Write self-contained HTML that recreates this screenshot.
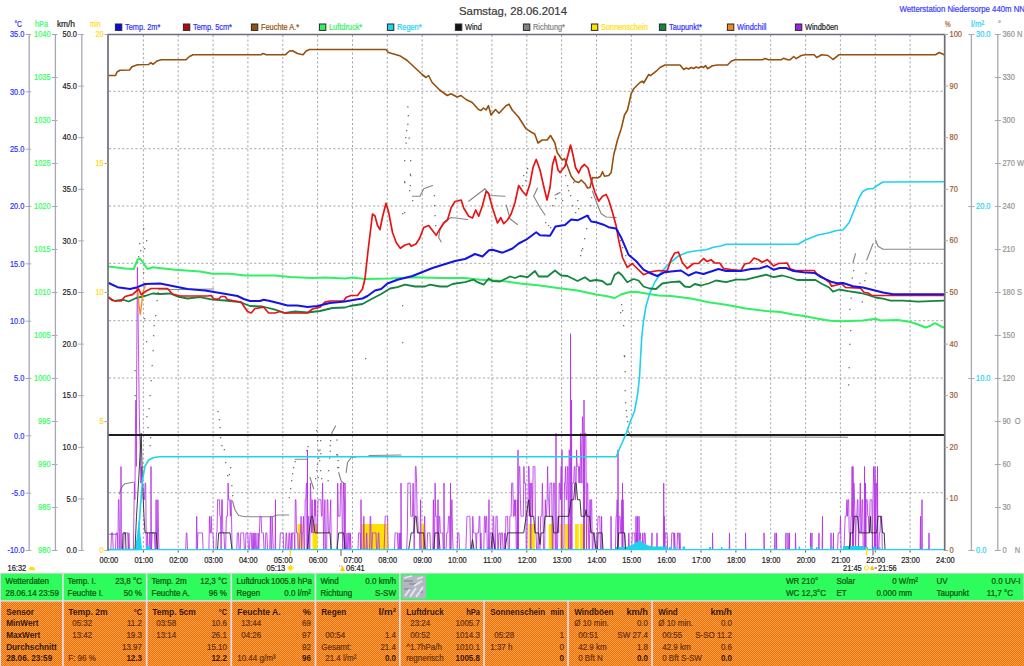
<!DOCTYPE html><html><head><meta charset="utf-8"><title>Wetterstation</title>
<style>html,body{margin:0;padding:0;background:#fff}svg{display:block}text{font-family:"Liberation Sans",sans-serif}</style></head><body>
<svg width="1024" height="666" viewBox="0 0 1024 666">
<defs><pattern id="dz" width="2" height="2" patternUnits="userSpaceOnUse"><rect width="2" height="2" fill="#EC6C08"/><rect x="0" y="0" width="1" height="1" fill="#FFA448"/><rect x="1" y="1" width="1" height="1" fill="#FFA448"/></pattern>
<clipPath id="cp"><rect x="108.0" y="34.0" width="836.5" height="517.0"/></clipPath></defs>
<rect width="1024" height="666" fill="#ffffff"/>
<path d="M143.4,35.0 V550.0 M178.2,35.0 V550.0 M213.1,35.0 V550.0 M247.9,35.0 V550.0 M282.8,35.0 V550.0 M317.6,35.0 V550.0 M352.5,35.0 V550.0 M387.3,35.0 V550.0 M422.2,35.0 V550.0 M457.0,35.0 V550.0 M491.9,35.0 V550.0 M526.8,35.0 V550.0 M561.6,35.0 V550.0 M596.5,35.0 V550.0 M631.3,35.0 V550.0 M666.2,35.0 V550.0 M701.0,35.0 V550.0 M735.9,35.0 V550.0 M770.7,35.0 V550.0 M805.6,35.0 V550.0 M840.4,35.0 V550.0 M875.3,35.0 V550.0 M910.1,35.0 V550.0 M109.0,91.3 H944.5 M109.0,148.7 H944.5 M109.0,206.0 H944.5 M109.0,263.3 H944.5 M109.0,320.7 H944.5 M109.0,378.0 H944.5 M109.0,435.3 H944.5 M109.0,492.7 H944.5" stroke="#85858f" stroke-width="0.75" stroke-dasharray="2.1 2.3" fill="none"/>
<g clip-path="url(#cp)" fill="none" stroke-linejoin="round" stroke-linecap="round">
<rect x="297.5" y="524" width="5.0" height="26" fill="#FFE100" stroke="none"/>
<rect x="312.5" y="524" width="5.0" height="26" fill="#FFE100" stroke="none"/>
<rect x="361.2" y="524" width="26.3" height="26" fill="#FFE100" stroke="none"/>
<rect x="421.2" y="524" width="3.8" height="26" fill="#FFE100" stroke="none"/>
<rect x="528.7" y="524" width="6.3" height="26" fill="#FFE100" stroke="none"/>
<rect x="548.7" y="524" width="5.0" height="26" fill="#FFE100" stroke="none"/>
<rect x="560.0" y="524" width="2.5" height="26" fill="#FFE100" stroke="none"/>
<rect x="565.0" y="524" width="6.2" height="26" fill="#FFE100" stroke="none"/>
<rect x="575.0" y="524" width="3.7" height="26" fill="#FFE100" stroke="none"/>
<rect x="580.0" y="524" width="3.7" height="26" fill="#FFE100" stroke="none"/>
<rect x="586.2" y="524" width="1.3" height="26" fill="#FFE100" stroke="none"/>
<path d="M108.7,534.2 L117.0,534.2 M119.5,494.0 L120.5,490.0 L122.5,486.2 L125.0,483.7 L134.5,482.0 M158.7,289.7 L213.7,289.0 M232.5,501.0 L235.0,510.0 L238.7,515.5 L245.0,516.7 L272.5,516.7 L277.5,515.0 L288.7,515.0 M295.0,459.2 L307.5,459.2 M310.0,477.5 L313.7,488.7 M331.3,436.0 L332.0,432.5 L335.6,426.0 M338.7,472.5 L341.2,481.2 L344.5,483.7 M346.2,472.5 L347.5,462.5 L351.2,457.5 L356.0,457.0 M369.0,455.5 L401.0,455.0 M412.5,196.2 L420.0,196.2 L423.7,188.7 L432.5,185.5 M441.2,242.0 L438.7,237.5 L440.0,230.0 L445.0,221.2 L451.2,217.5 L467.5,219.5 M468.7,201.2 L477.5,194.5 L485.0,188.7 L490.0,195.5 L505.0,196.2 M506.2,205.0 L510.0,218.7 L517.5,224.5 M537.5,188.0 L533.7,196.2 L540.0,207.5 L545.0,215.0 M555.0,195.0 L560.0,192.5 M592.5,191.2 L597.5,205.0 L601.2,213.7 L606.2,217.0 L616.2,217.5 M627.5,430.0 L631.2,436.7 L847.5,437.2 M855.5,253.7 L853.0,262.5 M873.0,243.7 L866.7,260.0 M875.5,240.0 L878.0,246.2 L883.0,249.2 L944.2,249.2" stroke="#868686" stroke-width="1.15"/>
<g fill="#707078" stroke="none"><rect x="330.0" y="440.0" width="1.3" height="1.3"/><rect x="329.6" y="445.0" width="1.3" height="1.3"/><rect x="329.6" y="450.6" width="1.3" height="1.3"/><rect x="329.0" y="457.5" width="1.3" height="1.3"/><rect x="328.0" y="470.0" width="1.3" height="1.3"/><rect x="327.5" y="480.0" width="1.3" height="1.3"/><rect x="336.2" y="439.4" width="1.3" height="1.3"/><rect x="336.9" y="454.4" width="1.3" height="1.3"/><rect x="337.5" y="460.0" width="1.3" height="1.3"/><rect x="338.1" y="466.9" width="1.3" height="1.3"/><rect x="320.0" y="440.0" width="1.3" height="1.3"/><rect x="319.4" y="449.4" width="1.3" height="1.3"/><rect x="320.2" y="453.0" width="1.3" height="1.3"/><rect x="318.0" y="457.5" width="1.3" height="1.3"/><rect x="316.9" y="463.7" width="1.3" height="1.3"/><rect x="316.2" y="470.0" width="1.3" height="1.3"/><rect x="317.5" y="476.9" width="1.3" height="1.3"/><rect x="315.0" y="478.0" width="1.3" height="1.3"/><rect x="407.2" y="106.2" width="1.3" height="1.3"/><rect x="407.7" y="115.0" width="1.3" height="1.3"/><rect x="407.2" y="123.7" width="1.3" height="1.3"/><rect x="406.0" y="130.0" width="1.3" height="1.3"/><rect x="408.5" y="137.5" width="1.3" height="1.3"/><rect x="405.5" y="142.5" width="1.3" height="1.3"/><rect x="409.7" y="173.7" width="1.3" height="1.3"/><rect x="404.0" y="181.2" width="1.3" height="1.3"/><rect x="409.7" y="185.0" width="1.3" height="1.3"/><rect x="151.5" y="365.0" width="1.3" height="1.3"/><rect x="150.5" y="380.0" width="1.3" height="1.3"/><rect x="149.5" y="395.0" width="1.3" height="1.3"/><rect x="148.5" y="408.0" width="1.3" height="1.3"/><rect x="134.5" y="370.0" width="1.3" height="1.3"/><rect x="134.5" y="395.0" width="1.3" height="1.3"/><rect x="405.0" y="137.0" width="1.3" height="1.3"/><rect x="410.0" y="160.0" width="1.3" height="1.3"/><rect x="404.0" y="160.0" width="1.3" height="1.3"/><rect x="410.0" y="175.0" width="1.3" height="1.3"/><rect x="404.0" y="182.0" width="1.3" height="1.3"/><rect x="409.0" y="190.0" width="1.3" height="1.3"/><rect x="412.0" y="200.0" width="1.3" height="1.3"/><rect x="404.0" y="212.0" width="1.3" height="1.3"/><rect x="433.7" y="195.0" width="1.3" height="1.3"/><rect x="434.0" y="205.0" width="1.3" height="1.3"/><rect x="434.5" y="215.0" width="1.3" height="1.3"/><rect x="435.0" y="225.0" width="1.3" height="1.3"/><rect x="146.2" y="416.0" width="1.3" height="1.3"/><rect x="147.5" y="427.0" width="1.3" height="1.3"/><rect x="150.0" y="437.0" width="1.3" height="1.3"/><rect x="149.5" y="445.0" width="1.3" height="1.3"/><rect x="146.0" y="240.0" width="1.3" height="1.3"/><rect x="144.0" y="248.0" width="1.3" height="1.3"/><rect x="140.0" y="250.0" width="1.3" height="1.3"/><rect x="138.0" y="256.0" width="1.3" height="1.3"/><rect x="143.0" y="228.0" width="1.3" height="1.3"/><rect x="139.0" y="243.0" width="1.3" height="1.3"/><rect x="137.0" y="262.0" width="1.3" height="1.3"/><rect x="144.0" y="295.0" width="1.3" height="1.3"/><rect x="143.0" y="272.0" width="1.3" height="1.3"/><rect x="157.5" y="292.0" width="1.3" height="1.3"/><rect x="156.5" y="300.0" width="1.3" height="1.3"/><rect x="155.0" y="315.0" width="1.3" height="1.3"/><rect x="153.5" y="325.0" width="1.3" height="1.3"/><rect x="153.0" y="335.0" width="1.3" height="1.3"/><rect x="152.5" y="350.0" width="1.3" height="1.3"/><rect x="146.0" y="341.0" width="1.3" height="1.3"/><rect x="144.0" y="318.0" width="1.3" height="1.3"/><rect x="217.5" y="411.0" width="1.3" height="1.3"/><rect x="218.7" y="419.0" width="1.3" height="1.3"/><rect x="219.5" y="427.0" width="1.3" height="1.3"/><rect x="220.0" y="437.0" width="1.3" height="1.3"/><rect x="221.2" y="445.0" width="1.3" height="1.3"/><rect x="223.7" y="449.0" width="1.3" height="1.3"/><rect x="225.0" y="462.0" width="1.3" height="1.3"/><rect x="230.0" y="467.0" width="1.3" height="1.3"/><rect x="228.7" y="474.0" width="1.3" height="1.3"/><rect x="227.0" y="475.0" width="1.3" height="1.3"/><rect x="231.2" y="485.0" width="1.3" height="1.3"/><rect x="232.0" y="495.0" width="1.3" height="1.3"/><rect x="288.7" y="497.0" width="1.3" height="1.3"/><rect x="290.0" y="488.0" width="1.3" height="1.3"/><rect x="291.0" y="480.0" width="1.3" height="1.3"/><rect x="292.0" y="473.0" width="1.3" height="1.3"/><rect x="293.0" y="467.0" width="1.3" height="1.3"/><rect x="294.5" y="461.0" width="1.3" height="1.3"/><rect x="306.2" y="450.0" width="1.3" height="1.3"/><rect x="307.5" y="446.0" width="1.3" height="1.3"/><rect x="317.0" y="440.0" width="1.3" height="1.3"/><rect x="318.0" y="450.0" width="1.3" height="1.3"/><rect x="319.0" y="460.0" width="1.3" height="1.3"/><rect x="320.0" y="470.0" width="1.3" height="1.3"/><rect x="321.0" y="478.0" width="1.3" height="1.3"/><rect x="316.0" y="430.0" width="1.3" height="1.3"/><rect x="336.0" y="454.0" width="1.3" height="1.3"/><rect x="337.0" y="467.0" width="1.3" height="1.3"/><rect x="525.0" y="180.0" width="1.3" height="1.3"/><rect x="523.0" y="175.0" width="1.3" height="1.3"/><rect x="527.0" y="168.0" width="1.3" height="1.3"/><rect x="522.0" y="185.0" width="1.3" height="1.3"/><rect x="526.0" y="172.0" width="1.3" height="1.3"/><rect x="545.0" y="222.0" width="1.3" height="1.3"/><rect x="548.0" y="225.0" width="1.3" height="1.3"/><rect x="550.0" y="227.0" width="1.3" height="1.3"/><rect x="552.0" y="205.0" width="1.3" height="1.3"/><rect x="555.0" y="198.0" width="1.3" height="1.3"/><rect x="557.0" y="193.0" width="1.3" height="1.3"/><rect x="565.0" y="175.0" width="1.3" height="1.3"/><rect x="567.0" y="185.0" width="1.3" height="1.3"/><rect x="570.0" y="195.0" width="1.3" height="1.3"/><rect x="572.0" y="205.0" width="1.3" height="1.3"/><rect x="575.0" y="212.0" width="1.3" height="1.3"/><rect x="577.0" y="200.0" width="1.3" height="1.3"/><rect x="568.0" y="190.0" width="1.3" height="1.3"/><rect x="573.0" y="182.0" width="1.3" height="1.3"/><rect x="562.0" y="200.0" width="1.3" height="1.3"/><rect x="578.0" y="208.0" width="1.3" height="1.3"/><rect x="580.0" y="255.0" width="1.3" height="1.3"/><rect x="582.0" y="248.0" width="1.3" height="1.3"/><rect x="584.0" y="238.0" width="1.3" height="1.3"/><rect x="586.0" y="228.0" width="1.3" height="1.3"/><rect x="588.0" y="215.0" width="1.3" height="1.3"/><rect x="590.0" y="205.0" width="1.3" height="1.3"/><rect x="591.0" y="197.0" width="1.3" height="1.3"/><rect x="581.0" y="250.0" width="1.3" height="1.3"/><rect x="617.5" y="230.0" width="1.3" height="1.3"/><rect x="620.0" y="240.0" width="1.3" height="1.3"/><rect x="622.0" y="247.0" width="1.3" height="1.3"/><rect x="625.0" y="255.0" width="1.3" height="1.3"/><rect x="623.7" y="355.0" width="1.3" height="1.3"/><rect x="624.5" y="371.0" width="1.3" height="1.3"/><rect x="624.5" y="390.0" width="1.3" height="1.3"/><rect x="625.0" y="402.0" width="1.3" height="1.3"/><rect x="625.7" y="410.0" width="1.3" height="1.3"/><rect x="626.2" y="416.0" width="1.3" height="1.3"/><rect x="627.0" y="421.0" width="1.3" height="1.3"/><rect x="627.5" y="427.0" width="1.3" height="1.3"/><rect x="620.0" y="312.0" width="1.3" height="1.3"/><rect x="621.0" y="304.0" width="1.3" height="1.3"/><rect x="622.0" y="310.0" width="1.3" height="1.3"/><rect x="623.0" y="325.0" width="1.3" height="1.3"/><rect x="624.0" y="356.0" width="1.3" height="1.3"/><rect x="853.0" y="270.0" width="1.3" height="1.3"/><rect x="851.7" y="277.5" width="1.3" height="1.3"/><rect x="850.5" y="297.5" width="1.3" height="1.3"/><rect x="849.2" y="308.7" width="1.3" height="1.3"/><rect x="865.5" y="272.5" width="1.3" height="1.3"/><rect x="864.2" y="280.0" width="1.3" height="1.3"/><rect x="859.2" y="282.5" width="1.3" height="1.3"/><rect x="861.7" y="301.2" width="1.3" height="1.3"/><rect x="850.0" y="330.0" width="1.3" height="1.3"/><rect x="849.2" y="343.7" width="1.3" height="1.3"/><rect x="848.5" y="367.0" width="1.3" height="1.3"/><rect x="848.0" y="384.2" width="1.3" height="1.3"/><rect x="402.0" y="213.0" width="1.3" height="1.3"/><rect x="402.0" y="305.0" width="1.3" height="1.3"/><rect x="402.0" y="342.0" width="1.3" height="1.3"/><rect x="365.0" y="358.0" width="1.3" height="1.3"/></g>
<path d="M108.0,549.5 L108.6,549.5 L109.2,549.5 L109.7,549.5 L110.3,549.5 L110.9,549.5 L111.5,532.9 L112.1,532.9 L112.6,532.9 L113.2,549.5 L113.8,549.5 L114.4,549.5 L115.0,549.5 L115.5,549.5 L116.1,532.9 L116.7,532.9 L117.3,532.9 L117.9,549.5 L118.4,499.7 L119.0,499.7 L119.6,549.5 L120.2,549.5 L120.7,549.5 L120.8,549.5 L121.0,466.5 L121.3,549.5 L121.3,549.5 L121.9,549.5 L122.5,549.5 L123.1,549.5 L123.7,549.5 L124.2,532.9 L124.8,532.9 L125.4,532.9 L126.0,532.9 L126.6,532.9 L127.1,532.9 L127.7,532.9 L128.3,549.5 L128.9,532.9 L129.5,549.5 L130.0,549.5 L130.6,549.5 L131.2,549.5 L131.8,549.5 L132.4,549.5 L132.9,549.5 L133.4,549.5 L133.9,516.3 L134.4,483.1 L134.9,499.7 L135.4,433.3 L135.9,400.1 L136.3,466.5 L136.8,350.3 L137.4,267.3 L137.9,300.5 L138.5,350.3 L139.1,400.1 L139.7,433.3 L140.3,449.9 L140.9,483.1 L141.4,466.5 L141.6,483.1 L142.2,483.1 L142.8,483.1 L143.4,499.7 L144.0,499.7 L144.5,499.7 L145.1,483.1 L145.7,483.1 L146.3,549.5 L146.9,549.5 L147.4,532.9 L148.0,549.5 L148.6,549.5 L149.2,549.5 L149.8,532.9 L150.3,549.5 L150.7,549.5 L150.9,549.5 L151.0,466.5 L151.3,549.5 L151.5,549.5 L152.1,532.9 L152.7,532.9 L153.2,532.9 L153.8,532.9 L154.4,532.9 L155.0,549.5 L155.6,549.5 L156.1,499.7 L156.7,549.5 L157.3,549.5 L157.9,499.7 L158.5,532.9 L159.0,549.5 L159.6,549.5 L160.2,549.5 L160.8,549.5 L161.4,549.5 L161.9,549.5 L162.5,549.5 L163.1,549.5 L163.7,549.5 L164.3,549.5 L164.8,549.5 L165.4,549.5 L166.0,549.5 L166.6,549.5 L167.2,549.5 L167.7,549.5 L168.3,549.5 L168.9,549.5 L169.5,549.5 L170.1,549.5 L170.6,549.5 L171.2,549.5 L171.8,549.5 L172.4,549.5 L173.0,549.5 L173.5,549.5 L174.1,549.5 L174.7,549.5 L175.3,549.5 L175.9,549.5 L176.4,549.5 L177.0,549.5 L177.6,549.5 L178.2,549.5 L178.8,549.5 L179.3,549.5 L179.9,549.5 L180.5,549.5 L181.1,549.5 L181.7,549.5 L182.2,549.5 L182.8,549.5 L183.4,549.5 L184.0,549.5 L184.6,549.5 L185.1,549.5 L185.7,549.5 L186.3,532.9 L186.9,532.9 L187.5,549.5 L188.0,549.5 L188.6,549.5 L189.2,549.5 L189.8,549.5 L190.4,549.5 L190.9,549.5 L191.5,549.5 L192.1,549.5 L192.7,549.5 L193.3,549.5 L193.8,549.5 L194.4,549.5 L195.0,549.5 L195.6,549.5 L196.2,549.5 L196.7,516.3 L197.3,549.5 L197.9,532.9 L198.5,532.9 L199.1,532.9 L199.6,532.9 L200.2,532.9 L200.8,532.9 L201.4,532.9 L202.0,532.9 L202.5,532.9 L203.1,549.5 L203.7,549.5 L204.3,549.5 L204.9,549.5 L205.4,549.5 L206.0,549.5 L206.6,549.5 L207.2,549.5 L207.8,549.5 L208.3,549.5 L208.9,549.5 L209.5,516.3 L210.1,532.9 L210.7,532.9 L211.2,516.3 L211.8,532.9 L212.4,532.9 L213.0,532.9 L213.6,549.5 L214.1,549.5 L214.7,549.5 L215.3,549.5 L215.9,549.5 L216.5,532.9 L217.0,532.9 L217.6,499.7 L218.2,499.7 L218.8,499.7 L219.4,499.7 L219.9,516.3 L220.5,516.3 L221.1,549.5 L221.7,499.7 L222.3,499.7 L222.8,532.9 L223.4,532.9 L224.0,532.9 L224.6,549.5 L225.2,549.5 L225.7,549.5 L226.3,516.3 L226.9,516.3 L227.5,516.3 L228.1,483.1 L228.6,499.7 L229.2,499.7 L229.8,499.7 L230.4,516.3 L231.0,499.7 L231.5,516.3 L232.1,549.5 L232.7,549.5 L233.3,549.5 L233.9,549.5 L234.4,549.5 L235.0,549.5 L235.6,549.5 L236.2,549.5 L236.8,549.5 L237.3,532.9 L237.9,532.9 L238.5,532.9 L239.1,549.5 L239.7,549.5 L240.2,549.5 L240.8,532.9 L241.4,532.9 L242.0,532.9 L242.6,532.9 L243.1,532.9 L243.7,532.9 L244.3,549.5 L244.9,549.5 L245.5,549.5 L246.0,532.9 L246.6,532.9 L247.2,532.9 L247.8,532.9 L248.4,549.5 L248.9,549.5 L249.5,549.5 L250.1,532.9 L250.7,532.9 L251.3,532.9 L251.8,549.5 L252.4,549.5 L253.0,532.9 L253.6,549.5 L254.2,532.9 L254.7,549.5 L255.3,549.5 L255.9,532.9 L256.5,549.5 L257.1,549.5 L257.6,549.5 L258.2,532.9 L258.8,549.5 L259.4,532.9 L260.0,516.3 L260.5,516.3 L261.1,516.3 L261.7,532.9 L262.3,532.9 L262.9,532.9 L263.4,532.9 L264.0,549.5 L264.6,549.5 L265.2,549.5 L265.8,532.9 L266.3,532.9 L266.9,532.9 L267.5,549.5 L268.1,549.5 L268.7,549.5 L269.2,549.5 L269.8,549.5 L270.4,516.3 L271.0,549.5 L271.6,549.5 L272.1,516.3 L272.7,532.9 L273.3,549.5 L273.9,549.5 L274.5,549.5 L275.0,549.5 L275.1,549.5 L275.5,499.7 L275.6,549.5 L275.9,549.5 L276.2,549.5 L276.8,549.5 L277.4,549.5 L277.9,549.5 L278.5,549.5 L279.1,549.5 L279.7,549.5 L280.3,532.9 L280.8,532.9 L281.4,532.9 L282.0,532.9 L282.6,532.9 L283.2,532.9 L283.7,549.5 L284.3,549.5 L284.9,549.5 L285.5,549.5 L286.1,532.9 L286.6,532.9 L287.2,549.5 L287.8,549.5 L288.4,549.5 L289.0,532.9 L289.5,532.9 L290.1,549.5 L290.7,549.5 L291.3,532.9 L291.9,549.5 L292.4,532.9 L293.0,532.9 L293.6,532.9 L294.2,532.9 L294.8,549.5 L295.3,499.7 L295.9,499.7 L296.5,532.9 L297.1,532.9 L297.7,532.9 L298.2,549.5 L298.8,549.5 L299.4,549.5 L300.0,532.9 L300.6,532.9 L301.1,516.3 L301.7,549.5 L302.3,532.9 L302.9,532.9 L303.5,516.3 L304.0,549.5 L304.6,549.5 L305.2,499.7 L305.8,499.7 L306.4,483.1 L306.9,483.1 L307.1,549.5 L307.5,449.9 L307.5,516.3 L307.9,549.5 L308.1,516.3 L308.7,516.3 L309.3,549.5 L309.8,549.5 L310.4,483.1 L311.0,499.7 L311.6,532.9 L312.2,499.7 L312.7,532.9 L313.3,532.9 L313.9,532.9 L314.5,499.7 L315.1,516.3 L315.6,499.7 L316.2,532.9 L316.8,532.9 L317.4,532.9 L318.0,499.7 L318.5,499.7 L319.1,499.7 L319.7,499.7 L320.3,499.7 L320.9,499.7 L321.4,516.3 L322.0,516.3 L322.6,483.1 L323.2,516.3 L323.8,549.5 L324.3,516.3 L324.9,499.7 L325.5,549.5 L326.1,549.5 L326.7,549.5 L327.2,499.7 L327.8,499.7 L328.4,532.9 L329.0,532.9 L329.6,532.9 L330.1,516.3 L330.7,499.7 L331.3,549.5 L331.9,549.5 L332.5,549.5 L333.0,549.5 L333.6,549.5 L334.2,549.5 L334.8,549.5 L335.4,549.5 L335.9,549.5 L336.5,549.5 L337.1,549.5 L337.7,483.1 L338.3,516.3 L338.8,516.3 L339.4,516.3 L340.0,516.3 L340.6,483.1 L341.2,483.1 L341.7,483.1 L342.3,532.9 L342.9,549.5 L343.5,483.1 L344.1,499.7 L344.6,499.7 L344.6,549.5 L345.0,483.1 L345.2,499.7 L345.4,549.5 L345.8,549.5 L346.4,549.5 L347.0,532.9 L347.5,549.5 L348.1,549.5 L348.7,532.9 L349.3,532.9 L349.9,549.5 L350.4,532.9 L351.0,549.5 L351.6,549.5 L352.2,549.5 L352.8,549.5 L353.3,549.5 L353.9,549.5 L354.5,549.5 L355.1,549.5 L355.7,549.5 L356.2,549.5 L356.8,549.5 L357.4,549.5 L358.0,549.5 L358.6,532.9 L359.1,532.9 L359.7,532.9 L360.3,532.9 L360.6,549.5 L360.9,532.9 L361.0,499.7 L361.4,549.5 L361.5,549.5 L362.0,549.5 L362.6,549.5 L363.2,549.5 L363.8,516.3 L364.4,549.5 L364.9,549.5 L365.5,549.5 L366.1,549.5 L366.7,532.9 L367.3,549.5 L367.8,549.5 L368.4,549.5 L369.0,549.5 L369.6,549.5 L370.2,516.3 L370.7,516.3 L371.3,549.5 L371.9,549.5 L372.5,532.9 L373.1,532.9 L373.6,532.9 L374.2,532.9 L374.8,532.9 L375.4,532.9 L376.0,532.9 L376.5,549.5 L377.1,549.5 L377.7,549.5 L378.3,532.9 L378.9,532.9 L379.4,549.5 L380.0,549.5 L380.6,549.5 L381.2,549.5 L381.8,549.5 L382.3,549.5 L382.9,549.5 L383.5,549.5 L384.1,549.5 L384.7,532.9 L385.2,516.3 L385.8,516.3 L386.4,516.3 L387.0,516.3 L387.6,516.3 L388.1,549.5 L388.7,549.5 L389.3,549.5 L389.9,549.5 L390.5,549.5 L391.0,549.5 L391.6,549.5 L392.2,549.5 L392.8,549.5 L393.4,549.5 L393.9,549.5 L394.5,549.5 L395.1,532.9 L395.7,532.9 L396.3,532.9 L396.8,532.9 L397.4,532.9 L398.0,549.5 L398.6,549.5 L399.2,532.9 L399.7,549.5 L400.3,532.9 L400.6,549.5 L400.9,549.5 L401.0,483.1 L401.4,549.5 L401.5,549.5 L402.1,549.5 L402.6,549.5 L403.2,549.5 L403.8,549.5 L404.4,549.5 L405.0,549.5 L405.5,549.5 L406.1,549.5 L406.7,549.5 L407.3,532.9 L407.9,483.1 L408.4,483.1 L409.0,483.1 L409.6,483.1 L410.2,483.1 L410.8,516.3 L411.3,516.3 L411.9,516.3 L412.5,516.3 L413.1,483.1 L413.7,516.3 L414.2,549.5 L414.8,516.3 L415.4,466.5 L416.0,466.5 L416.6,483.1 L417.1,516.3 L417.7,516.3 L418.3,532.9 L418.9,532.9 L419.5,532.9 L420.0,549.5 L420.6,499.7 L421.2,549.5 L421.8,549.5 L422.4,549.5 L422.9,549.5 L423.5,549.5 L424.1,532.9 L424.7,516.3 L425.3,549.5 L425.8,549.5 L426.4,549.5 L427.0,549.5 L427.6,532.9 L428.2,532.9 L428.7,532.9 L429.3,532.9 L429.9,532.9 L430.5,549.5 L431.1,549.5 L431.6,549.5 L432.2,549.5 L432.8,549.5 L433.4,499.7 L434.0,549.5 L434.5,549.5 L435.1,483.1 L435.7,516.3 L436.3,516.3 L436.9,516.3 L437.4,549.5 L438.0,499.7 L438.6,549.5 L439.2,516.3 L439.8,516.3 L440.3,532.9 L440.9,532.9 L441.5,532.9 L442.1,532.9 L442.7,532.9 L443.2,549.5 L443.6,549.5 L443.8,549.5 L444.0,483.1 L444.4,549.5 L444.4,549.5 L445.0,549.5 L445.6,549.5 L446.1,549.5 L446.7,532.9 L447.3,532.9 L447.9,532.9 L448.5,516.3 L449.0,516.3 L449.6,516.3 L450.1,549.5 L450.2,532.9 L450.5,483.1 L450.8,532.9 L450.9,549.5 L451.4,516.3 L451.9,499.7 L452.5,532.9 L453.1,549.5 L453.7,549.5 L454.3,549.5 L454.8,549.5 L455.4,549.5 L456.0,549.5 L456.6,549.5 L457.2,549.5 L457.7,532.9 L458.3,532.9 L458.9,532.9 L459.5,549.5 L460.1,549.5 L460.6,549.5 L461.2,549.5 L461.8,549.5 L462.4,549.5 L463.0,549.5 L463.5,549.5 L464.1,549.5 L464.7,549.5 L465.3,549.5 L465.9,549.5 L466.4,532.9 L467.0,516.3 L467.6,516.3 L468.2,516.3 L468.8,516.3 L469.3,516.3 L469.9,516.3 L470.5,549.5 L471.1,549.5 L471.7,549.5 L472.2,549.5 L472.8,516.3 L473.4,532.9 L474.0,532.9 L474.6,532.9 L475.1,532.9 L475.7,532.9 L476.3,549.5 L476.9,532.9 L477.5,532.9 L478.0,532.9 L478.6,532.9 L479.2,516.3 L479.8,516.3 L480.4,549.5 L480.9,532.9 L481.5,549.5 L482.1,549.5 L482.7,549.5 L483.3,549.5 L483.8,549.5 L484.4,516.3 L485.0,516.3 L485.6,532.9 L486.2,516.3 L486.7,516.3 L487.3,549.5 L487.9,549.5 L488.5,549.5 L488.6,549.5 L489.0,499.7 L489.1,549.5 L489.4,549.5 L489.6,549.5 L490.2,532.9 L490.8,532.9 L491.4,532.9 L492.0,532.9 L492.5,549.5 L493.1,516.3 L493.7,516.3 L494.3,549.5 L494.9,549.5 L495.4,549.5 L496.0,516.3 L496.6,516.3 L497.2,516.3 L497.8,549.5 L498.3,549.5 L498.9,532.9 L499.5,532.9 L500.1,532.9 L500.7,549.5 L501.2,532.9 L501.8,532.9 L502.4,532.9 L503.0,549.5 L503.6,549.5 L504.1,549.5 L504.7,532.9 L505.3,549.5 L505.9,516.3 L506.5,516.3 L507.0,516.3 L507.6,516.3 L508.2,549.5 L508.8,549.5 L509.4,549.5 L509.9,516.3 L510.5,516.3 L511.1,516.3 L511.7,483.1 L512.3,483.1 L512.8,483.1 L513.4,516.3 L514.0,516.3 L514.6,499.7 L515.2,516.3 L515.7,499.7 L516.3,549.5 L516.9,549.5 L517.5,499.7 L517.6,549.5 L518.0,449.9 L518.1,499.7 L518.4,549.5 L518.6,499.7 L519.2,466.5 L519.8,466.5 L520.4,499.7 L521.0,516.3 L521.5,516.3 L522.1,516.3 L522.7,516.3 L523.3,516.3 L523.9,466.5 L524.4,483.1 L525.0,483.1 L525.6,483.1 L526.2,549.5 L526.8,549.5 L527.3,516.3 L527.9,516.3 L528.5,466.5 L529.1,466.5 L529.7,516.3 L530.2,483.1 L530.8,549.5 L531.4,483.1 L532.0,483.1 L532.6,516.3 L533.1,466.5 L533.7,466.5 L534.3,466.5 L534.9,466.5 L535.5,532.9 L536.0,532.9 L536.6,549.5 L537.2,549.5 L537.8,549.5 L538.4,516.3 L538.9,549.5 L539.5,549.5 L540.1,549.5 L540.7,516.3 L541.3,516.3 L541.8,516.3 L542.4,483.1 L543.0,516.3 L543.6,549.5 L544.2,549.5 L544.7,549.5 L545.3,499.7 L545.9,516.3 L546.5,516.3 L547.1,499.7 L547.6,466.5 L548.2,499.7 L548.8,499.7 L549.4,516.3 L550.0,483.1 L550.5,483.1 L551.1,483.1 L551.7,483.1 L552.3,549.5 L552.9,549.5 L553.4,483.1 L554.0,483.1 L554.6,483.1 L555.2,549.5 L555.6,549.5 L555.8,549.5 L556.0,433.3 L556.3,549.5 L556.4,549.5 L556.9,549.5 L557.5,549.5 L558.1,516.3 L558.7,532.9 L559.2,483.1 L559.8,483.1 L560.4,499.7 L561.0,466.5 L561.6,466.5 L561.6,549.5 L562.0,449.9 L562.1,549.5 L562.4,549.5 L562.7,549.5 L563.3,549.5 L563.9,549.5 L564.5,483.1 L565.0,483.1 L565.6,466.5 L566.2,499.7 L566.8,499.7 L567.4,466.5 L567.9,466.5 L568.5,549.5 L569.1,449.9 L569.7,449.9 L570.1,549.5 L570.3,483.1 L570.5,333.7 L570.8,483.1 L570.9,549.5 L571.1,549.5 L571.4,483.1 L571.5,400.1 L571.9,549.5 L572.0,483.1 L572.6,483.1 L573.2,483.1 L573.7,483.1 L574.3,466.5 L574.9,466.5 L575.5,499.7 L576.1,483.1 L576.6,449.9 L577.2,466.5 L577.8,466.5 L578.4,466.5 L579.0,483.1 L579.5,466.5 L580.1,483.1 L580.7,433.3 L581.3,449.9 L581.9,483.1 L582.4,416.7 L583.0,433.3 L583.6,466.5 L583.6,549.5 L584.0,400.1 L584.2,449.9 L584.4,549.5 L584.8,433.3 L585.3,433.3 L585.9,433.3 L586.5,549.5 L587.1,483.1 L587.7,483.1 L588.2,516.3 L588.8,549.5 L589.4,549.5 L590.0,499.7 L590.6,532.9 L591.1,499.7 L591.7,499.7 L592.3,549.5 L592.9,549.5 L593.5,532.9 L594.0,532.9 L594.6,532.9 L595.2,549.5 L595.8,549.5 L596.4,549.5 L596.9,532.9 L597.5,532.9 L598.1,516.3 L598.7,516.3 L599.3,516.3 L599.8,516.3 L600.4,549.5 L601.0,549.5 L601.6,516.3 L602.2,549.5 L602.7,549.5 L603.3,549.5 L603.9,549.5 L604.5,549.5 L605.1,549.5 L605.6,549.5 L606.2,549.5 L606.8,549.5 L607.4,549.5 L608.0,549.5 L608.5,549.5 L609.1,549.5 L609.7,549.5 L610.3,549.5 L610.6,549.5 L610.9,549.5 L611.0,516.3 L611.4,549.5 L611.4,549.5 L612.0,549.5 L612.6,549.5 L613.2,549.5 L613.8,549.5 L614.3,549.5 L614.9,549.5 L615.5,549.5 L616.1,516.3 L616.7,516.3 L617.2,499.7 L617.6,549.5 L617.8,549.5 L618.0,449.9 L618.4,549.5 L618.4,549.5 L619.0,516.3 L619.6,516.3 L620.1,516.3 L620.7,532.9 L621.3,532.9 L621.9,499.7 L622.1,549.5 L622.5,483.1 L622.5,483.1 L622.9,549.5 L623.0,499.7 L623.6,532.9 L624.2,532.9 L624.8,532.9 L625.4,549.5 L625.9,549.5 L626.5,549.5 L627.1,549.5 L627.7,549.5 L628.3,549.5 L628.8,532.9 L629.4,549.5 L630.0,549.5 L630.6,549.5 L631.2,549.5 L631.7,549.5 L632.3,532.9 L632.9,532.9 L633.5,532.9 L634.1,532.9 L634.6,532.9 L635.2,549.5 L635.6,549.5 L635.8,549.5 L636.0,516.3 L636.4,549.5 L636.4,532.9 L637.0,532.9 L637.1,549.5 L637.5,516.3 L637.5,549.5 L637.9,549.5 L638.1,549.5 L638.6,549.5 L638.7,549.5 L639.0,516.3 L639.3,532.9 L639.4,549.5 L639.9,532.9 L640.4,532.9 L641.0,549.5 L641.6,549.5 L642.2,549.5 L642.8,532.9 L643.3,549.5 L643.9,549.5 L644.5,532.9 L645.1,532.9 L645.7,549.5 L646.2,549.5 L646.8,549.5 L647.4,549.5 L648.0,549.5 L648.6,549.5 L649.1,549.5 L649.7,549.5 L650.3,549.5 L650.9,549.5 L651.5,549.5 L651.6,549.5 L652.0,532.9 L652.0,549.5 L652.4,549.5 L652.6,549.5 L653.2,549.5 L653.8,549.5 L654.4,549.5 L654.9,549.5 L655.5,549.5 L656.1,549.5 L656.6,549.5 L656.7,549.5 L657.0,532.9 L657.3,549.5 L657.4,549.5 L657.8,549.5 L658.4,549.5 L659.0,549.5 L659.6,549.5 L660.2,549.5 L660.7,549.5 L661.3,549.5 L661.9,549.5 L662.5,549.5 L663.1,549.5 L663.4,549.5 L663.6,516.3 L663.7,483.1 L664.1,549.5 L664.2,516.3 L664.8,549.5 L665.4,532.9 L666.0,532.9 L666.5,532.9 L667.1,532.9 L667.7,549.5 L668.3,549.5 L668.9,549.5 L669.4,549.5 L670.0,549.5 L670.6,549.5 L671.2,549.5 L671.8,532.9 L672.3,532.9 L672.9,532.9 L673.5,532.9 L674.1,549.5 L674.7,532.9 L675.2,549.5 L675.8,549.5 L676.4,549.5 L677.0,549.5 L677.6,532.9 L678.1,532.9 L678.7,532.9 L679.3,549.5 L679.9,532.9 L680.5,549.5 L681.0,549.5 L681.6,549.5 L682.2,549.5 L682.8,549.5 L683.4,549.5 L683.9,549.5 L684.5,549.5 L685.1,549.5 L685.7,549.5 L686.3,549.5 L686.8,549.5 L687.4,549.5 L688.0,549.5 L688.6,549.5 L689.2,549.5 L689.7,549.5 L690.3,549.5 L690.9,549.5 L691.5,549.5 L692.1,549.5 L692.6,549.5 L693.2,549.5 L693.8,549.5 L694.4,549.5 L695.0,549.5 L695.5,549.5 L696.1,549.5 L696.7,549.5 L697.3,549.5 L697.9,549.5 L698.4,549.5 L699.0,549.5 L699.6,549.5 L700.2,549.5 L700.8,549.5 L701.3,549.5 L701.9,549.5 L702.5,549.5 L703.1,549.5 L703.7,549.5 L704.2,549.5 L704.8,549.5 L705.4,549.5 L706.0,549.5 L706.6,549.5 L707.1,549.5 L707.7,549.5 L708.3,549.5 L708.9,549.5 L709.5,549.5 L710.0,549.5 L710.6,549.5 L711.2,549.5 L711.8,549.5 L712.1,549.5 L712.4,549.5 L712.5,532.9 L712.9,549.5 L712.9,549.5 L713.5,549.5 L714.1,549.5 L714.7,549.5 L715.3,549.5 L715.8,549.5 L716.4,549.5 L717.0,549.5 L717.6,549.5 L718.2,549.5 L718.7,549.5 L719.3,549.5 L719.9,549.5 L720.5,549.5 L721.1,549.5 L721.6,549.5 L722.2,549.5 L722.8,549.5 L723.4,549.5 L724.0,549.5 L724.5,549.5 L725.1,549.5 L725.7,549.5 L726.3,549.5 L726.9,549.5 L727.4,549.5 L728.0,549.5 L728.6,549.5 L729.1,549.5 L729.2,549.5 L729.5,532.9 L729.8,549.5 L729.9,549.5 L730.3,549.5 L730.9,549.5 L731.5,549.5 L732.1,549.5 L732.7,549.5 L733.2,549.5 L733.8,549.5 L734.4,549.5 L735.0,549.5 L735.6,549.5 L736.1,549.5 L736.7,549.5 L737.3,549.5 L737.9,549.5 L738.5,549.5 L739.0,549.5 L739.6,549.5 L740.2,549.5 L740.8,549.5 L741.4,549.5 L741.9,549.5 L742.5,549.5 L743.1,549.5 L743.7,549.5 L744.3,549.5 L744.8,549.5 L745.1,549.5 L745.4,549.5 L745.5,532.9 L745.9,549.5 L746.0,549.5 L746.6,549.5 L747.2,549.5 L747.7,549.5 L748.3,549.5 L748.9,549.5 L749.5,549.5 L750.1,549.5 L750.6,549.5 L751.2,549.5 L751.8,549.5 L752.4,549.5 L753.0,549.5 L753.5,549.5 L754.1,549.5 L754.7,549.5 L755.3,549.5 L755.9,549.5 L756.4,549.5 L757.0,549.5 L757.6,549.5 L758.2,549.5 L758.8,549.5 L759.3,549.5 L759.9,549.5 L760.5,549.5 L761.1,549.5 L761.7,549.5 L762.2,549.5 L762.8,549.5 L763.4,549.5 L763.6,549.5 L764.0,549.5 L764.0,532.9 L764.4,549.5 L764.6,549.5 L765.1,549.5 L765.7,549.5 L766.3,549.5 L766.9,549.5 L767.5,549.5 L768.0,549.5 L768.6,549.5 L769.2,549.5 L769.8,549.5 L770.4,549.5 L770.9,549.5 L771.5,549.5 L772.1,549.5 L772.7,549.5 L773.3,549.5 L773.8,549.5 L774.4,549.5 L774.6,549.5 L775.0,532.9 L775.0,549.5 L775.4,549.5 L775.6,549.5 L776.1,549.5 L776.2,549.5 L776.5,532.9 L776.7,549.5 L776.9,549.5 L777.3,549.5 L777.9,549.5 L778.5,549.5 L779.1,549.5 L779.6,549.5 L780.2,549.5 L780.8,549.5 L781.4,549.5 L782.0,549.5 L782.5,549.5 L783.1,549.5 L783.7,549.5 L784.3,549.5 L784.9,549.5 L785.4,549.5 L785.6,549.5 L786.0,532.9 L786.0,549.5 L786.4,549.5 L786.6,549.5 L787.2,549.5 L787.6,549.5 L787.8,549.5 L788.0,532.9 L788.3,549.5 L788.4,549.5 L788.9,549.5 L789.1,549.5 L789.5,532.9 L789.5,549.5 L789.9,549.5 L790.1,549.5 L790.7,549.5 L791.2,549.5 L791.8,549.5 L792.4,549.5 L793.0,549.5 L793.6,549.5 L794.1,549.5 L794.7,549.5 L795.1,549.5 L795.3,549.5 L795.5,532.9 L795.9,549.5 L795.9,549.5 L796.5,549.5 L797.0,549.5 L797.6,549.5 L798.2,549.5 L798.8,549.5 L799.4,549.5 L799.9,549.5 L800.5,549.5 L801.1,549.5 L801.7,549.5 L802.3,549.5 L802.8,549.5 L803.4,549.5 L804.0,549.5 L804.6,549.5 L805.2,549.5 L805.7,549.5 L806.3,549.5 L806.9,549.5 L807.5,549.5 L808.1,549.5 L808.6,549.5 L809.2,549.5 L809.8,549.5 L810.1,549.5 L810.4,549.5 L810.5,532.9 L810.9,549.5 L811.0,549.5 L811.5,549.5 L811.6,549.5 L812.0,532.9 L812.1,549.5 L812.4,549.5 L812.7,549.5 L813.3,549.5 L813.9,549.5 L814.4,549.5 L815.0,549.5 L815.6,549.5 L816.2,549.5 L816.8,549.5 L817.3,549.5 L817.9,549.5 L818.5,549.5 L818.6,549.5 L819.0,532.9 L819.1,549.5 L819.4,549.5 L819.7,549.5 L820.2,549.5 L820.8,549.5 L821.4,549.5 L822.0,549.5 L822.1,549.5 L822.5,516.3 L822.6,549.5 L822.9,549.5 L823.1,549.5 L823.7,549.5 L824.3,549.5 L824.9,549.5 L825.5,549.5 L826.0,549.5 L826.6,549.5 L827.2,549.5 L827.8,549.5 L828.4,549.5 L828.9,549.5 L829.5,549.5 L830.1,549.5 L830.6,549.5 L830.7,549.5 L831.0,532.9 L831.3,549.5 L831.4,549.5 L831.8,549.5 L832.4,549.5 L833.0,549.5 L833.1,549.5 L833.5,532.9 L833.6,549.5 L833.9,549.5 L834.2,549.5 L834.7,549.5 L835.3,549.5 L835.9,549.5 L836.5,549.5 L837.1,549.5 L837.6,549.5 L838.2,532.9 L838.8,532.9 L839.4,532.9 L840.0,532.9 L840.5,516.3 L841.1,549.5 L841.7,549.5 L842.3,549.5 L842.9,549.5 L843.4,549.5 L844.0,549.5 L844.6,532.9 L845.2,516.3 L845.8,516.3 L846.3,516.3 L846.9,499.7 L847.5,516.3 L848.1,499.7 L848.7,499.7 L849.2,532.9 L849.8,532.9 L850.4,549.5 L851.0,516.3 L851.6,516.3 L852.1,466.5 L852.6,549.5 L852.7,499.7 L853.0,466.5 L853.3,483.1 L853.4,549.5 L853.9,483.1 L854.5,499.7 L855.0,516.3 L855.6,549.5 L856.2,516.3 L856.8,516.3 L857.4,499.7 L857.9,499.7 L858.5,549.5 L859.1,516.3 L859.7,516.3 L860.3,483.1 L860.8,532.9 L861.4,532.9 L862.0,499.7 L862.6,499.7 L863.2,549.5 L863.7,549.5 L864.1,549.5 L864.3,549.5 L864.5,466.5 L864.9,549.5 L864.9,549.5 L865.1,549.5 L865.5,549.5 L865.5,483.1 L865.9,549.5 L866.1,499.7 L866.6,499.7 L867.2,499.7 L867.8,516.3 L868.4,516.3 L869.0,532.9 L869.5,532.9 L870.1,499.7 L870.7,499.7 L871.3,499.7 L871.9,499.7 L872.4,549.5 L873.0,499.7 L873.6,466.5 L874.2,483.1 L874.6,549.5 L874.8,483.1 L875.0,466.5 L875.3,483.1 L875.4,549.5 L875.9,483.1 L876.5,483.1 L877.1,516.3 L877.1,549.5 L877.5,466.5 L877.7,516.3 L877.9,549.5 L878.2,549.5 L878.8,549.5 L879.4,532.9 L880.0,532.9 L880.6,516.3 L881.1,516.3 L881.7,516.3 L882.3,549.5 L882.9,549.5 L883.5,549.5 L884.0,549.5 L884.6,549.5 L885.2,549.5 L885.8,549.5 L886.4,549.5 L886.9,549.5 L887.5,549.5 L888.1,549.5 L888.7,549.5 L889.3,549.5 L889.8,549.5 L890.4,549.5 L891.0,549.5 L891.6,549.5 L892.2,549.5 L892.7,549.5 L893.3,549.5 L893.9,549.5 L894.5,549.5 L895.1,549.5 L895.6,549.5 L896.2,549.5 L896.8,549.5 L897.4,549.5 L898.0,549.5 L898.5,549.5 L899.1,549.5 L899.7,549.5 L900.3,549.5 L900.9,549.5 L901.4,549.5 L902.0,549.5 L902.6,549.5 L903.2,549.5 L903.8,549.5 L904.3,549.5 L904.9,549.5 L905.5,549.5 L906.1,549.5 L906.7,549.5 L907.2,549.5 L907.8,549.5 L908.4,549.5 L909.0,549.5 L909.6,549.5 L910.1,549.5 L910.7,549.5 L911.3,549.5 L911.9,549.5 L912.5,549.5 L913.0,549.5 L913.6,549.5 L914.2,549.5 L914.8,549.5 L915.4,549.5 L915.9,549.5 L916.5,549.5 L917.1,549.5 L917.7,549.5 L918.3,549.5 L918.8,549.5 L919.4,549.5 L920.0,549.5 L920.1,549.5 L920.5,516.3 L920.6,549.5 L920.9,549.5 L921.2,549.5 L921.6,549.5 L921.7,549.5 L922.0,499.7 L922.3,549.5 L922.4,549.5 L922.9,549.5 L923.5,549.5 L924.1,549.5 L924.6,549.5 L925.2,549.5 L925.8,549.5 L926.4,549.5 L927.0,549.5 L927.5,549.5 L928.1,549.5 L928.6,549.5 L928.7,549.5 L929.0,532.9 L929.3,549.5 L929.4,549.5 L929.9,549.5 L930.4,549.5 L931.0,549.5 L931.6,549.5 L932.2,549.5 L932.8,549.5 L933.3,549.5 L933.9,549.5 L934.5,549.5 L935.1,549.5 L935.7,549.5 L936.2,549.5 L936.8,549.5 L937.4,549.5 L938.0,549.5 L938.6,549.5 L939.1,549.5 L939.7,549.5 L940.3,549.5 L940.9,549.5 L941.5,549.5 L942.0,549.5 L942.6,549.5 L943.2,549.5 L943.8,549.5 L944.4,549.5" stroke="#B432E6" stroke-width="0.85" stroke-linejoin="miter"/>
<path d="M135.0,549.5 L137.0,535.0 L138.7,520.0 L140.5,535.0 L142.0,549.5Z" fill="#1ED2F0" stroke="none"/>
<path d="M146.0,549.5 L146.0,546.0 L150.0,546.0 L150.0,549.5Z" fill="#1ED2F0" stroke="none"/>
<path d="M616.0,549.5 L616.0,547.0 L626.0,547.0 L632.0,545.0 L637.0,542.0 L640.0,540.0 L643.0,543.0 L647.0,545.0 L652.0,546.5 L667.0,546.5 L667.0,549.5Z" fill="#1ED2F0" stroke="none"/>
<path d="M669.0,549.5 L669.0,547.0 L671.5,547.0 L671.5,549.5Z" fill="#1ED2F0" stroke="none"/>
<path d="M674.0,549.5 L674.0,547.0 L676.0,547.0 L676.0,549.5Z" fill="#1ED2F0" stroke="none"/>
<path d="M682.5,549.5 L682.5,546.5 L685.0,546.5 L685.0,549.5Z" fill="#1ED2F0" stroke="none"/>
<path d="M709.0,549.5 L709.0,547.0 L711.0,547.0 L711.0,549.5Z" fill="#1ED2F0" stroke="none"/>
<path d="M721.0,549.5 L721.0,547.0 L722.5,547.0 L722.5,549.5Z" fill="#1ED2F0" stroke="none"/>
<path d="M798.5,549.5 L798.5,546.5 L800.0,546.5 L800.0,549.5Z" fill="#1ED2F0" stroke="none"/>
<path d="M810.0,549.5 L810.0,546.5 L812.0,546.5 L812.0,549.5Z" fill="#1ED2F0" stroke="none"/>
<path d="M816.0,549.5 L816.0,547.0 L817.5,547.0 L817.5,549.5Z" fill="#1ED2F0" stroke="none"/>
<path d="M831.0,549.5 L831.0,546.5 L832.5,546.5 L832.5,549.5Z" fill="#1ED2F0" stroke="none"/>
<path d="M843.0,549.5 L843.0,546.0 L863.0,546.0 L863.0,549.5Z" fill="#1ED2F0" stroke="none"/>
<path d="M864.5,549.5 L864.5,547.0 L868.0,547.0 L868.0,549.5Z" fill="#1ED2F0" stroke="none"/>
<path d="M873.0,549.5 L873.0,546.5 L875.5,546.5 L875.5,549.5Z" fill="#1ED2F0" stroke="none"/>
<path d="M879.0,549.5 L879.0,547.0 L880.5,547.0 L880.5,549.5Z" fill="#1ED2F0" stroke="none"/>
<path d="M108.0,549.5 L122.5,549.5 L123.0,532.9 L125.5,532.9 L126.0,549.5 L135.0,549.5 L136.5,516.3 L138.5,483.1 L141.2,433.3 L142.5,483.1 L144.0,516.3 L145.0,532.9 L156.2,532.9 L157.5,549.5 L217.5,549.5 L218.7,532.9 L230.0,532.9 L232.0,549.5 L307.5,549.5 L309.0,532.9 L311.2,516.3 L312.7,516.3 L315.0,532.9 L330.0,532.9 L331.0,549.5 L337.0,549.5 L338.7,532.9 L343.7,532.9 L345.0,549.5 L408.7,549.5 L411.2,532.9 L413.7,532.9 L415.0,516.3 L416.2,516.3 L417.5,532.9 L423.7,532.9 L425.0,549.5 L433.7,549.5 L435.0,532.9 L438.7,532.9 L440.0,549.5 L471.0,549.5 L472.5,539.5 L474.0,549.5 L491.0,549.5 L492.5,532.9 L495.0,549.5 L505.0,549.5 L507.5,532.9 L523.7,532.9 L526.2,516.3 L528.7,499.7 L530.0,516.3 L533.7,516.3 L535.0,532.9 L538.7,532.9 L540.0,544.5 L541.2,532.9 L543.7,532.9 L545.0,516.3 L552.5,516.3 L553.7,532.9 L557.5,532.9 L558.7,516.3 L568.7,516.3 L571.2,499.7 L573.7,499.7 L575.0,483.1 L576.2,483.1 L577.5,499.7 L580.0,499.7 L581.2,516.3 L585.0,516.3 L586.0,509.7 L587.0,516.3 L589.5,516.3 L591.2,532.9 L593.7,532.9 L596.0,549.5 L597.5,549.5 L598.0,532.9 L602.0,532.9 L603.0,549.5 L617.5,549.5 L618.7,532.9 L624.5,532.9 L625.5,549.5 L849.2,549.5 L850.5,532.9 L853.0,532.9 L854.2,516.3 L857.5,516.3 L859.2,532.9 L869.5,532.9 L870.5,516.3 L871.0,532.9 L876.7,532.9 L878.0,516.3 L881.0,516.3 L882.5,532.9 L884.2,532.9 L885.0,549.5 L944.2,549.5" stroke="#282828" stroke-width="0.9" stroke-linejoin="miter"/>
<path d="M108.0,549.6 H944.5" stroke="#1ED2F0" stroke-width="1.4"/>
<path d="M108.0,435 H944.5" stroke="#1e1e1e" stroke-width="2.2" stroke-linecap="butt"/>
<path d="M108.0,75.5 L115.5,75.5 L117.0,72.0 L120.0,70.2 L129.5,70.0 L132.0,66.7 L137.5,64.8 L148.7,64.5 L150.7,62.7 L153.2,64.2 L157.0,61.0 L161.2,59.8 L185.7,59.8 L189.5,56.5 L193.0,54.7 L261.2,54.7 L263.0,53.5 L266.2,54.7 L285.5,54.7 L289.5,51.0 L292.5,50.7 L297.5,53.5 L303.0,54.7 L306.2,51.0 L309.5,49.5 L386.0,49.5 L388.5,52.5 L399.7,55.7 L407.2,60.5 L414.7,67.5 L422.2,74.5 L426.0,77.5 L428.5,75.5 L432.2,82.5 L439.7,90.0 L447.2,95.5 L451.0,93.7 L457.2,97.0 L461.0,95.5 L466.0,99.5 L472.2,102.5 L478.5,109.5 L481.0,110.5 L483.5,108.0 L486.0,110.0 L488.5,105.7 L491.0,115.0 L495.5,109.5 L499.0,113.2 L506.0,105.7 L509.0,104.2 L512.2,110.0 L518.5,117.0 L526.0,128.7 L531.0,132.0 L534.7,134.0 L538.0,143.0 L542.2,140.0 L547.2,140.0 L550.5,135.5 L554.7,142.5 L557.2,152.5 L562.2,160.0 L564.7,158.7 L567.5,166.2 L571.2,176.2 L575.0,181.2 L578.7,182.5 L581.2,180.0 L585.0,183.7 L587.5,188.0 L590.0,187.5 L592.5,177.5 L597.5,178.0 L600.5,176.2 L602.5,171.7 L604.5,176.2 L608.7,175.5 L611.2,172.5 L613.7,155.0 L617.5,140.0 L621.2,128.7 L624.5,115.0 L627.5,110.0 L631.2,93.7 L633.7,88.7 L640.0,82.5 L642.5,81.2 L643.7,83.0 L648.7,74.5 L650.5,75.7 L656.2,71.2 L660.0,67.5 L665.0,65.0 L680.0,65.0 L683.7,69.5 L686.2,68.0 L688.7,69.0 L691.2,67.5 L693.7,68.5 L696.2,67.0 L698.7,68.0 L701.2,66.5 L703.7,67.5 L705.5,65.5 L707.5,68.7 L712.5,65.7 L717.5,65.0 L727.5,65.0 L731.2,61.2 L735.0,59.8 L762.5,59.8 L765.0,58.5 L768.7,59.8 L781.2,59.8 L783.7,58.2 L787.5,59.8 L790.0,59.8 L793.7,56.5 L796.2,58.7 L801.2,55.5 L805.0,54.7 L814.2,54.7 L816.7,57.5 L821.7,54.7 L828.0,55.5 L833.0,59.5 L839.2,54.7 L935.5,54.7 L939.2,52.5 L944.2,54.7" stroke="#94500F" stroke-width="1.6"/>
<path d="M108.7,266.5 L125.0,268.5 L133.7,269.0 L137.5,259.7 L140.0,258.5 L143.7,263.5 L147.5,269.0 L152.5,267.2 L175.0,269.7 L200.0,271.5 L212.5,273.7 L230.0,273.7 L245.0,275.5 L275.0,275.5 L290.0,277.0 L312.5,278.0 L325.0,277.5 L345.0,278.5 L352.5,277.5 L365.0,279.0 L390.0,278.5 L415.0,277.2 L440.0,278.0 L465.0,278.0 L480.0,279.7 L502.5,281.0 L520.0,283.5 L540.0,285.5 L557.5,288.0 L577.5,290.5 L596.0,294.5 L606.0,296.0 L614.7,298.0 L621.0,294.5 L628.5,292.2 L636.0,291.7 L646.0,293.5 L658.5,295.5 L671.0,296.0 L691.0,298.5 L708.5,302.2 L726.0,304.7 L746.0,308.5 L766.0,311.0 L780.5,312.0 L793.0,314.5 L805.5,316.2 L818.0,318.7 L830.5,320.7 L843.0,321.2 L863.0,320.5 L875.5,318.7 L880.5,320.5 L898.0,320.0 L910.5,322.0 L918.0,324.5 L925.5,327.5 L930.5,325.7 L935.0,323.2 L940.5,326.2 L944.2,327.5" stroke="#32F064" stroke-width="2"/>
<path d="M108.7,549.5 L137.5,549.5 L140.0,512.5 L142.5,480.0 L145.0,466.2 L148.7,460.0 L153.7,457.5 L160.0,456.7 L616.2,456.7 L620.0,447.5 L626.2,433.7 L630.0,422.5 L634.5,411.2 L637.5,395.0 L639.5,377.5 L640.7,355.0 L641.7,338.0 L643.5,321.0 L646.0,306.0 L649.7,293.5 L654.7,282.2 L662.2,271.0 L669.7,263.0 L678.5,256.0 L687.2,252.2 L698.5,250.5 L706.0,249.7 L713.5,247.2 L721.0,246.0 L726.0,244.2 L798.0,244.2 L805.5,240.0 L818.0,235.0 L828.0,233.0 L836.7,230.5 L843.0,230.0 L849.2,222.5 L854.2,210.0 L859.2,197.5 L863.0,191.2 L868.0,188.7 L873.0,188.7 L878.0,185.0 L883.0,182.0 L944.2,181.7" stroke="#1ED2F0" stroke-width="1.6"/>
<path d="M108.7,298.0 L115.0,301.0 L122.5,299.7 L128.7,301.5 L136.2,298.0 L145.0,296.0 L152.5,293.5 L160.0,294.0 L170.0,293.5 L177.5,296.5 L187.5,298.5 L200.0,297.2 L212.5,299.7 L225.0,300.5 L240.0,302.2 L250.0,306.0 L262.5,306.5 L275.0,309.7 L285.0,313.0 L295.0,311.5 L307.5,312.5 L320.0,311.0 L332.5,308.0 L345.0,307.5 L350.0,306.0 L362.5,304.0 L372.5,298.5 L381.2,294.0 L390.0,288.5 L397.5,287.2 L405.0,284.7 L415.0,286.5 L425.0,286.5 L430.0,284.7 L440.0,286.5 L447.5,286.5 L452.5,284.0 L465.0,282.2 L473.7,279.7 L477.5,282.2 L483.7,284.7 L488.7,278.5 L492.5,281.0 L500.0,281.5 L510.0,276.5 L515.0,278.0 L520.0,276.0 L527.5,277.2 L535.0,271.0 L538.7,276.5 L547.5,276.5 L555.0,270.5 L561.2,275.5 L567.5,276.0 L577.5,281.0 L585.0,277.2 L590.0,281.0 L596.0,280.0 L602.2,281.0 L607.2,284.7 L611.0,284.0 L614.7,274.7 L618.5,272.2 L622.2,275.5 L627.2,282.2 L633.5,279.0 L638.5,280.5 L643.5,286.5 L649.7,288.5 L656.0,289.0 L662.2,283.5 L671.0,282.2 L679.7,281.5 L684.7,286.5 L689.7,287.2 L694.7,284.0 L701.0,285.5 L708.5,283.5 L716.0,280.5 L726.0,282.2 L736.0,279.7 L746.0,279.7 L756.0,277.2 L766.0,274.7 L773.5,277.2 L782.2,275.5 L789.7,277.5 L797.2,280.0 L815.5,280.0 L821.7,283.7 L829.2,287.5 L833.0,291.7 L839.2,289.5 L848.0,291.2 L860.5,293.0 L868.0,295.0 L875.5,297.5 L883.0,298.7 L890.5,300.7 L903.0,300.7 L918.0,301.7 L930.5,301.2 L944.2,300.7" stroke="#14853F" stroke-width="1.8"/>
<path d="M136.0,288.5 L137.5,290.0 L139.0,305.0 L140.3,314.5 L141.5,305.0 L143.0,292.0 L144.5,287.5 L146.0,284.5" stroke="#F08C1E" stroke-width="1.3"/>
<path d="M108.7,297.2 L112.5,300.5 L121.2,301.0 L125.0,296.5 L132.5,294.7 L138.7,289.0 L141.2,294.7 L146.2,291.0 L151.2,288.5 L167.5,288.5 L172.5,294.0 L180.0,296.0 L207.5,296.0 L211.2,295.5 L213.7,299.0 L218.7,299.0 L221.2,296.5 L225.0,296.5 L227.5,299.7 L235.0,301.0 L241.2,302.2 L247.5,311.5 L251.2,313.0 L255.0,308.5 L263.7,307.2 L268.7,313.0 L275.0,313.0 L280.0,311.5 L285.0,313.0 L307.5,313.0 L312.5,309.0 L320.0,307.2 L325.0,302.2 L330.0,301.0 L343.7,301.0 L346.2,297.2 L351.2,295.5 L357.5,295.5 L362.5,289.0 L365.0,278.5 L368.0,251.0 L372.5,214.0 L375.0,216.0 L377.5,225.5 L380.0,229.5 L382.5,217.0 L386.0,203.3 L388.7,212.5 L392.5,232.5 L396.2,242.5 L400.3,248.3 L405.0,245.0 L409.5,243.7 L411.2,246.2 L416.2,243.7 L420.0,237.5 L423.7,227.5 L428.7,225.5 L432.5,230.5 L436.2,235.3 L440.0,228.7 L443.7,223.0 L447.5,220.0 L451.2,207.5 L455.0,201.5 L461.2,200.0 L463.7,208.0 L468.7,216.3 L472.5,218.0 L475.7,210.0 L478.7,216.2 L482.5,205.5 L486.2,191.2 L488.7,193.7 L492.5,208.0 L497.5,223.0 L500.7,217.7 L503.7,223.7 L507.5,220.0 L511.2,213.7 L515.0,202.5 L518.7,185.5 L522.5,191.2 L526.2,195.5 L530.0,183.7 L533.0,167.5 L536.2,159.5 L540.0,170.0 L543.7,186.2 L547.0,200.0 L550.0,187.5 L552.5,165.0 L555.0,156.2 L558.0,170.0 L560.0,172.5 L565.0,166.2 L568.0,155.0 L570.5,145.0 L573.0,155.0 L575.5,167.5 L578.7,173.0 L581.2,167.5 L584.5,164.5 L588.0,168.0 L591.2,180.0 L595.0,192.5 L598.7,201.2 L602.5,196.2 L606.2,194.5 L608.7,200.0 L612.5,212.5 L616.2,226.0 L618.7,240.0 L622.5,257.5 L627.3,267.3 L632.2,263.5 L637.2,268.5 L643.5,274.7 L649.7,272.2 L658.5,270.5 L667.2,271.0 L671.0,259.7 L674.7,253.0 L678.5,252.2 L682.2,262.2 L687.2,268.5 L693.5,263.5 L698.5,263.5 L703.5,258.5 L707.2,261.5 L711.0,259.7 L714.7,263.0 L719.7,263.0 L723.5,268.5 L731.0,269.7 L741.0,270.5 L744.7,264.0 L749.7,263.0 L754.0,258.0 L758.5,259.7 L762.2,262.2 L767.2,259.7 L771.0,263.0 L773.5,266.0 L778.5,263.5 L787.2,263.0 L790.0,268.7 L795.5,270.5 L814.2,270.5 L816.7,273.7 L823.0,277.5 L829.2,282.0 L831.7,286.2 L836.7,285.0 L841.7,283.7 L845.5,287.5 L860.5,288.2 L864.2,292.5 L868.0,293.0 L871.7,295.5 L944.2,295.5" stroke="#E61414" stroke-width="1.7"/>
<path d="M108.7,283.0 L117.5,287.2 L130.0,289.0 L137.5,287.2 L145.0,284.0 L160.0,283.5 L175.0,286.5 L187.5,289.0 L205.0,290.5 L220.0,293.0 L237.5,296.0 L243.7,299.0 L250.0,301.0 L260.0,301.0 L263.7,299.7 L270.0,301.0 L280.0,303.5 L287.5,305.5 L297.5,305.5 L307.5,307.0 L317.5,306.0 L330.0,303.0 L345.0,301.5 L356.0,299.5 L362.5,298.5 L367.5,296.0 L375.0,290.5 L381.2,289.0 L387.5,283.5 L397.5,279.7 L412.5,276.0 L432.5,268.0 L455.0,261.0 L465.0,259.0 L475.0,254.0 L482.5,256.5 L489.0,250.3 L492.5,249.7 L502.5,252.7 L512.5,248.5 L518.7,243.5 L526.2,239.7 L536.2,232.2 L540.0,235.3 L550.0,235.7 L555.5,226.5 L565.0,225.0 L571.2,219.5 L577.5,220.3 L587.3,215.6 L591.2,221.5 L596.0,222.2 L603.5,224.7 L608.5,227.2 L616.0,228.5 L621.0,237.2 L628.5,254.7 L636.0,261.0 L643.5,269.7 L651.0,273.5 L657.2,276.0 L664.7,272.2 L671.0,271.5 L681.0,270.5 L688.5,275.5 L696.0,272.2 L703.5,274.0 L711.0,271.5 L718.5,269.0 L726.0,271.0 L741.0,271.0 L751.0,269.0 L759.7,268.5 L767.2,266.0 L773.5,269.7 L779.7,268.0 L786.0,268.0 L793.5,271.0 L803.5,272.2 L814.7,273.0 L821.0,277.2 L831.0,281.7 L837.2,283.2 L843.0,283.0 L853.0,286.2 L863.0,287.5 L873.0,290.0 L883.0,292.5 L893.0,294.2 L944.2,294.2" stroke="#1414E6" stroke-width="2"/>
</g>
<path d="M108.0,34.0 V551.0" stroke="#6e6e78" stroke-width="1.7"/>
<path d="M107.2,34.6 H945.3" stroke="#6e6e78" stroke-width="1.5"/>
<path d="M944.7,34.0 V551.0" stroke="#6e6e78" stroke-width="1.7"/>
<path d="M143.4,550.5 v2 M178.2,550.5 v2 M213.1,550.5 v2 M247.9,550.5 v2 M282.8,550.5 v2 M317.6,550.5 v2 M352.5,550.5 v2 M387.3,550.5 v2 M422.2,550.5 v2 M457.0,550.5 v2 M491.9,550.5 v2 M526.8,550.5 v2 M561.6,550.5 v2 M596.5,550.5 v2 M631.3,550.5 v2 M666.2,550.5 v2 M701.0,550.5 v2 M735.9,550.5 v2 M770.7,550.5 v2 M805.6,550.5 v2 M840.4,550.5 v2 M875.3,550.5 v2 M910.1,550.5 v2" stroke="#505058" stroke-width="1"/>
<path d="M29.2,34.0 V551.0" stroke="#a8a8b4" stroke-width="1.3"/>
<path d="M25.7,34.5 H31.2" stroke="#a8a8b4" stroke-width="1"/>
<text x="24.4" y="37.2" font-size="9" fill="#3232FF" stroke="#3232FF" stroke-width=".22" text-anchor="end" textLength="14.5" lengthAdjust="spacingAndGlyphs">35.0</text>
<path d="M25.7,91.8 H31.2" stroke="#a8a8b4" stroke-width="1"/>
<text x="24.4" y="94.5" font-size="9" fill="#3232FF" stroke="#3232FF" stroke-width=".22" text-anchor="end" textLength="14.5" lengthAdjust="spacingAndGlyphs">30.0</text>
<path d="M25.7,149.2 H31.2" stroke="#a8a8b4" stroke-width="1"/>
<text x="24.4" y="151.9" font-size="9" fill="#3232FF" stroke="#3232FF" stroke-width=".22" text-anchor="end" textLength="14.5" lengthAdjust="spacingAndGlyphs">25.0</text>
<path d="M25.7,206.5 H31.2" stroke="#a8a8b4" stroke-width="1"/>
<text x="24.4" y="209.2" font-size="9" fill="#3232FF" stroke="#3232FF" stroke-width=".22" text-anchor="end" textLength="14.5" lengthAdjust="spacingAndGlyphs">20.0</text>
<path d="M25.7,263.8 H31.2" stroke="#a8a8b4" stroke-width="1"/>
<text x="24.4" y="266.5" font-size="9" fill="#3232FF" stroke="#3232FF" stroke-width=".22" text-anchor="end" textLength="14.5" lengthAdjust="spacingAndGlyphs">15.0</text>
<path d="M25.7,321.2 H31.2" stroke="#a8a8b4" stroke-width="1"/>
<text x="24.4" y="323.9" font-size="9" fill="#3232FF" stroke="#3232FF" stroke-width=".22" text-anchor="end" textLength="14.5" lengthAdjust="spacingAndGlyphs">10.0</text>
<path d="M25.7,378.5 H31.2" stroke="#a8a8b4" stroke-width="1"/>
<text x="24.4" y="381.2" font-size="9" fill="#3232FF" stroke="#3232FF" stroke-width=".22" text-anchor="end" textLength="10.4" lengthAdjust="spacingAndGlyphs">5.0</text>
<path d="M25.7,435.8 H31.2" stroke="#a8a8b4" stroke-width="1"/>
<text x="24.4" y="438.5" font-size="9" fill="#3232FF" stroke="#3232FF" stroke-width=".22" text-anchor="end" textLength="10.4" lengthAdjust="spacingAndGlyphs">0.0</text>
<path d="M25.7,493.2 H31.2" stroke="#a8a8b4" stroke-width="1"/>
<text x="24.4" y="495.9" font-size="9" fill="#3232FF" stroke="#3232FF" stroke-width=".22" text-anchor="end" textLength="12.9" lengthAdjust="spacingAndGlyphs">-5.0</text>
<path d="M25.7,550.5 H31.2" stroke="#a8a8b4" stroke-width="1"/>
<text x="24.4" y="553.2" font-size="9" fill="#3232FF" stroke="#3232FF" stroke-width=".22" text-anchor="end" textLength="17.0" lengthAdjust="spacingAndGlyphs">-10.0</text>
<text x="14.4" y="27.0" font-size="9" fill="#3232FF" stroke="#3232FF" stroke-width=".22" textLength="7.5" lengthAdjust="spacingAndGlyphs">°C</text>
<path d="M55.4,34.0 V551.0" stroke="#a8a8b4" stroke-width="1.3"/>
<path d="M51.9,34.5 H57.4" stroke="#a8a8b4" stroke-width="1"/>
<text x="50.6" y="37.2" font-size="9" fill="#32FF64" stroke="#32FF64" stroke-width=".22" text-anchor="end" textLength="16.6" lengthAdjust="spacingAndGlyphs">1040</text>
<path d="M51.9,77.5 H57.4" stroke="#a8a8b4" stroke-width="1"/>
<text x="50.6" y="80.2" font-size="9" fill="#32FF64" stroke="#32FF64" stroke-width=".22" text-anchor="end" textLength="16.6" lengthAdjust="spacingAndGlyphs">1035</text>
<path d="M51.9,120.5 H57.4" stroke="#a8a8b4" stroke-width="1"/>
<text x="50.6" y="123.2" font-size="9" fill="#32FF64" stroke="#32FF64" stroke-width=".22" text-anchor="end" textLength="16.6" lengthAdjust="spacingAndGlyphs">1030</text>
<path d="M51.9,163.5 H57.4" stroke="#a8a8b4" stroke-width="1"/>
<text x="50.6" y="166.2" font-size="9" fill="#32FF64" stroke="#32FF64" stroke-width=".22" text-anchor="end" textLength="16.6" lengthAdjust="spacingAndGlyphs">1025</text>
<path d="M51.9,206.5 H57.4" stroke="#a8a8b4" stroke-width="1"/>
<text x="50.6" y="209.2" font-size="9" fill="#32FF64" stroke="#32FF64" stroke-width=".22" text-anchor="end" textLength="16.6" lengthAdjust="spacingAndGlyphs">1020</text>
<path d="M51.9,249.5 H57.4" stroke="#a8a8b4" stroke-width="1"/>
<text x="50.6" y="252.2" font-size="9" fill="#32FF64" stroke="#32FF64" stroke-width=".22" text-anchor="end" textLength="16.6" lengthAdjust="spacingAndGlyphs">1015</text>
<path d="M51.9,292.5 H57.4" stroke="#a8a8b4" stroke-width="1"/>
<text x="50.6" y="295.2" font-size="9" fill="#32FF64" stroke="#32FF64" stroke-width=".22" text-anchor="end" textLength="16.6" lengthAdjust="spacingAndGlyphs">1010</text>
<path d="M51.9,335.5 H57.4" stroke="#a8a8b4" stroke-width="1"/>
<text x="50.6" y="338.2" font-size="9" fill="#32FF64" stroke="#32FF64" stroke-width=".22" text-anchor="end" textLength="16.6" lengthAdjust="spacingAndGlyphs">1005</text>
<path d="M51.9,378.5 H57.4" stroke="#a8a8b4" stroke-width="1"/>
<text x="50.6" y="381.2" font-size="9" fill="#32FF64" stroke="#32FF64" stroke-width=".22" text-anchor="end" textLength="16.6" lengthAdjust="spacingAndGlyphs">1000</text>
<path d="M51.9,421.5 H57.4" stroke="#a8a8b4" stroke-width="1"/>
<text x="50.6" y="424.2" font-size="9" fill="#32FF64" stroke="#32FF64" stroke-width=".22" text-anchor="end" textLength="12.5" lengthAdjust="spacingAndGlyphs">995</text>
<path d="M51.9,464.5 H57.4" stroke="#a8a8b4" stroke-width="1"/>
<text x="50.6" y="467.2" font-size="9" fill="#32FF64" stroke="#32FF64" stroke-width=".22" text-anchor="end" textLength="12.5" lengthAdjust="spacingAndGlyphs">990</text>
<path d="M51.9,507.5 H57.4" stroke="#a8a8b4" stroke-width="1"/>
<text x="50.6" y="510.2" font-size="9" fill="#32FF64" stroke="#32FF64" stroke-width=".22" text-anchor="end" textLength="12.5" lengthAdjust="spacingAndGlyphs">985</text>
<path d="M51.9,550.5 H57.4" stroke="#a8a8b4" stroke-width="1"/>
<text x="50.6" y="553.2" font-size="9" fill="#32FF64" stroke="#32FF64" stroke-width=".22" text-anchor="end" textLength="12.5" lengthAdjust="spacingAndGlyphs">980</text>
<text x="35.0" y="27.0" font-size="9" fill="#32FF64" stroke="#32FF64" stroke-width=".22" textLength="13.0" lengthAdjust="spacingAndGlyphs">hPa</text>
<path d="M81.8,34.0 V551.0" stroke="#a8a8b4" stroke-width="1.3"/>
<path d="M78.3,34.5 H83.8" stroke="#a8a8b4" stroke-width="1"/>
<text x="77.0" y="37.2" font-size="9" fill="#1e1e1e" stroke="#1e1e1e" stroke-width=".22" text-anchor="end" textLength="14.5" lengthAdjust="spacingAndGlyphs">50.0</text>
<path d="M78.3,86.1 H83.8" stroke="#a8a8b4" stroke-width="1"/>
<text x="77.0" y="88.8" font-size="9" fill="#1e1e1e" stroke="#1e1e1e" stroke-width=".22" text-anchor="end" textLength="14.5" lengthAdjust="spacingAndGlyphs">45.0</text>
<path d="M78.3,137.7 H83.8" stroke="#a8a8b4" stroke-width="1"/>
<text x="77.0" y="140.4" font-size="9" fill="#1e1e1e" stroke="#1e1e1e" stroke-width=".22" text-anchor="end" textLength="14.5" lengthAdjust="spacingAndGlyphs">40.0</text>
<path d="M78.3,189.3 H83.8" stroke="#a8a8b4" stroke-width="1"/>
<text x="77.0" y="192.0" font-size="9" fill="#1e1e1e" stroke="#1e1e1e" stroke-width=".22" text-anchor="end" textLength="14.5" lengthAdjust="spacingAndGlyphs">35.0</text>
<path d="M78.3,240.9 H83.8" stroke="#a8a8b4" stroke-width="1"/>
<text x="77.0" y="243.6" font-size="9" fill="#1e1e1e" stroke="#1e1e1e" stroke-width=".22" text-anchor="end" textLength="14.5" lengthAdjust="spacingAndGlyphs">30.0</text>
<path d="M78.3,292.5 H83.8" stroke="#a8a8b4" stroke-width="1"/>
<text x="77.0" y="295.2" font-size="9" fill="#1e1e1e" stroke="#1e1e1e" stroke-width=".22" text-anchor="end" textLength="14.5" lengthAdjust="spacingAndGlyphs">25.0</text>
<path d="M78.3,344.1 H83.8" stroke="#a8a8b4" stroke-width="1"/>
<text x="77.0" y="346.8" font-size="9" fill="#1e1e1e" stroke="#1e1e1e" stroke-width=".22" text-anchor="end" textLength="14.5" lengthAdjust="spacingAndGlyphs">20.0</text>
<path d="M78.3,395.7 H83.8" stroke="#a8a8b4" stroke-width="1"/>
<text x="77.0" y="398.4" font-size="9" fill="#1e1e1e" stroke="#1e1e1e" stroke-width=".22" text-anchor="end" textLength="14.5" lengthAdjust="spacingAndGlyphs">15.0</text>
<path d="M78.3,447.3 H83.8" stroke="#a8a8b4" stroke-width="1"/>
<text x="77.0" y="450.0" font-size="9" fill="#1e1e1e" stroke="#1e1e1e" stroke-width=".22" text-anchor="end" textLength="14.5" lengthAdjust="spacingAndGlyphs">10.0</text>
<path d="M78.3,498.9 H83.8" stroke="#a8a8b4" stroke-width="1"/>
<text x="77.0" y="501.6" font-size="9" fill="#1e1e1e" stroke="#1e1e1e" stroke-width=".22" text-anchor="end" textLength="10.4" lengthAdjust="spacingAndGlyphs">5.0</text>
<path d="M78.3,550.5 H83.8" stroke="#a8a8b4" stroke-width="1"/>
<text x="77.0" y="553.2" font-size="9" fill="#1e1e1e" stroke="#1e1e1e" stroke-width=".22" text-anchor="end" textLength="10.4" lengthAdjust="spacingAndGlyphs">0.0</text>
<text x="56.9" y="27.0" font-size="9" fill="#1e1e1e" stroke="#1e1e1e" stroke-width=".22" textLength="18.1" lengthAdjust="spacingAndGlyphs">km/h</text>
<path d="M104.5,34.5 H108.0" stroke="#a8a8b4" stroke-width="1"/>
<text x="103.7" y="37.2" font-size="9" fill="#FFDC14" stroke="#FFDC14" stroke-width=".22" text-anchor="end" textLength="8.3" lengthAdjust="spacingAndGlyphs">20</text>
<path d="M104.5,163.5 H108.0" stroke="#a8a8b4" stroke-width="1"/>
<text x="103.7" y="166.2" font-size="9" fill="#FFDC14" stroke="#FFDC14" stroke-width=".22" text-anchor="end" textLength="8.3" lengthAdjust="spacingAndGlyphs">15</text>
<path d="M104.5,292.5 H108.0" stroke="#a8a8b4" stroke-width="1"/>
<text x="103.7" y="295.2" font-size="9" fill="#FFDC14" stroke="#FFDC14" stroke-width=".22" text-anchor="end" textLength="8.3" lengthAdjust="spacingAndGlyphs">10</text>
<path d="M104.5,421.5 H108.0" stroke="#a8a8b4" stroke-width="1"/>
<text x="103.7" y="424.2" font-size="9" fill="#FFDC14" stroke="#FFDC14" stroke-width=".22" text-anchor="end" textLength="4.2" lengthAdjust="spacingAndGlyphs">5</text>
<path d="M104.5,550.5 H108.0" stroke="#a8a8b4" stroke-width="1"/>
<text x="103.7" y="553.2" font-size="9" fill="#FFDC14" stroke="#FFDC14" stroke-width=".22" text-anchor="end" textLength="4.2" lengthAdjust="spacingAndGlyphs">0</text>
<text x="90.0" y="27.0" font-size="9" fill="#FFDC14" stroke="#FFDC14" stroke-width=".22" textLength="10.6" lengthAdjust="spacingAndGlyphs">min</text>
<path d="M944.5,34.5 H948.0" stroke="#a8a8b4" stroke-width="1"/>
<text x="949.5" y="37.0" font-size="9" fill="#A55A2D" stroke="#A55A2D" stroke-width=".22" textLength="12.5" lengthAdjust="spacingAndGlyphs">100</text>
<path d="M944.5,86.1 H948.0" stroke="#a8a8b4" stroke-width="1"/>
<text x="949.5" y="88.6" font-size="9" fill="#A55A2D" stroke="#A55A2D" stroke-width=".22" textLength="8.3" lengthAdjust="spacingAndGlyphs">90</text>
<path d="M944.5,137.7 H948.0" stroke="#a8a8b4" stroke-width="1"/>
<text x="949.5" y="140.2" font-size="9" fill="#A55A2D" stroke="#A55A2D" stroke-width=".22" textLength="8.3" lengthAdjust="spacingAndGlyphs">80</text>
<path d="M944.5,189.3 H948.0" stroke="#a8a8b4" stroke-width="1"/>
<text x="949.5" y="191.8" font-size="9" fill="#A55A2D" stroke="#A55A2D" stroke-width=".22" textLength="8.3" lengthAdjust="spacingAndGlyphs">70</text>
<path d="M944.5,240.9 H948.0" stroke="#a8a8b4" stroke-width="1"/>
<text x="949.5" y="243.4" font-size="9" fill="#A55A2D" stroke="#A55A2D" stroke-width=".22" textLength="8.3" lengthAdjust="spacingAndGlyphs">60</text>
<path d="M944.5,292.5 H948.0" stroke="#a8a8b4" stroke-width="1"/>
<text x="949.5" y="295.0" font-size="9" fill="#A55A2D" stroke="#A55A2D" stroke-width=".22" textLength="8.3" lengthAdjust="spacingAndGlyphs">50</text>
<path d="M944.5,344.1 H948.0" stroke="#a8a8b4" stroke-width="1"/>
<text x="949.5" y="346.6" font-size="9" fill="#A55A2D" stroke="#A55A2D" stroke-width=".22" textLength="8.3" lengthAdjust="spacingAndGlyphs">40</text>
<path d="M944.5,395.7 H948.0" stroke="#a8a8b4" stroke-width="1"/>
<text x="949.5" y="398.2" font-size="9" fill="#A55A2D" stroke="#A55A2D" stroke-width=".22" textLength="8.3" lengthAdjust="spacingAndGlyphs">30</text>
<path d="M944.5,447.3 H948.0" stroke="#a8a8b4" stroke-width="1"/>
<text x="949.5" y="449.8" font-size="9" fill="#A55A2D" stroke="#A55A2D" stroke-width=".22" textLength="8.3" lengthAdjust="spacingAndGlyphs">20</text>
<path d="M944.5,498.9 H948.0" stroke="#a8a8b4" stroke-width="1"/>
<text x="949.5" y="501.4" font-size="9" fill="#A55A2D" stroke="#A55A2D" stroke-width=".22" textLength="8.3" lengthAdjust="spacingAndGlyphs">10</text>
<path d="M944.5,550.5 H948.0" stroke="#a8a8b4" stroke-width="1"/>
<text x="949.5" y="553.0" font-size="9" fill="#A55A2D" stroke="#A55A2D" stroke-width=".22" textLength="4.2" lengthAdjust="spacingAndGlyphs">0</text>
<text x="945.0" y="26.5" font-size="9" fill="#A55A2D" stroke="#A55A2D" stroke-width=".22" textLength="5.6" lengthAdjust="spacingAndGlyphs">%</text>
<path d="M971.4,34.0 V551.0" stroke="#a8a8b4" stroke-width="1.3"/>
<path d="M968.4,34.5 H974.4" stroke="#a8a8b4" stroke-width="1"/>
<text x="976.0" y="37.0" font-size="9" fill="#28D2F0" stroke="#28D2F0" stroke-width=".22" textLength="14.5" lengthAdjust="spacingAndGlyphs">30.0</text>
<path d="M968.4,206.5 H974.4" stroke="#a8a8b4" stroke-width="1"/>
<text x="976.0" y="209.0" font-size="9" fill="#28D2F0" stroke="#28D2F0" stroke-width=".22" textLength="14.5" lengthAdjust="spacingAndGlyphs">20.0</text>
<path d="M968.4,378.5 H974.4" stroke="#a8a8b4" stroke-width="1"/>
<text x="976.0" y="381.0" font-size="9" fill="#28D2F0" stroke="#28D2F0" stroke-width=".22" textLength="14.5" lengthAdjust="spacingAndGlyphs">10.0</text>
<path d="M968.4,550.5 H974.4" stroke="#a8a8b4" stroke-width="1"/>
<text x="976.0" y="553.0" font-size="9" fill="#28D2F0" stroke="#28D2F0" stroke-width=".22" textLength="10.4" lengthAdjust="spacingAndGlyphs">0.0</text>
<text x="971.0" y="26.5" font-size="9" fill="#28D2F0" stroke="#28D2F0" stroke-width=".22" textLength="13.0" lengthAdjust="spacingAndGlyphs">l/m²</text>
<path d="M997.8,34.0 V551.0" stroke="#a8a8b4" stroke-width="1.3"/>
<path d="M994.8,34.5 H1000.8" stroke="#a8a8b4" stroke-width="1"/>
<text x="1002.4" y="37.0" font-size="9" fill="#969696" stroke="#969696" stroke-width=".22" textLength="19.9" lengthAdjust="spacingAndGlyphs">360 N</text>
<path d="M994.8,77.5 H1000.8" stroke="#a8a8b4" stroke-width="1"/>
<text x="1002.4" y="80.0" font-size="9" fill="#969696" stroke="#969696" stroke-width=".22" textLength="12.5" lengthAdjust="spacingAndGlyphs">330</text>
<path d="M994.8,120.5 H1000.8" stroke="#a8a8b4" stroke-width="1"/>
<text x="1002.4" y="123.0" font-size="9" fill="#969696" stroke="#969696" stroke-width=".22" textLength="12.5" lengthAdjust="spacingAndGlyphs">300</text>
<path d="M994.8,163.5 H1000.8" stroke="#a8a8b4" stroke-width="1"/>
<text x="1002.4" y="166.0" font-size="9" fill="#969696" stroke="#969696" stroke-width=".22" textLength="21.6" lengthAdjust="spacingAndGlyphs">270 W</text>
<path d="M994.8,206.5 H1000.8" stroke="#a8a8b4" stroke-width="1"/>
<text x="1002.4" y="209.0" font-size="9" fill="#969696" stroke="#969696" stroke-width=".22" textLength="12.5" lengthAdjust="spacingAndGlyphs">240</text>
<path d="M994.8,249.5 H1000.8" stroke="#a8a8b4" stroke-width="1"/>
<text x="1002.4" y="252.0" font-size="9" fill="#969696" stroke="#969696" stroke-width=".22" textLength="12.5" lengthAdjust="spacingAndGlyphs">210</text>
<path d="M994.8,292.5 H1000.8" stroke="#a8a8b4" stroke-width="1"/>
<text x="1002.4" y="295.0" font-size="9" fill="#969696" stroke="#969696" stroke-width=".22" textLength="19.5" lengthAdjust="spacingAndGlyphs">180 S</text>
<path d="M994.8,335.5 H1000.8" stroke="#a8a8b4" stroke-width="1"/>
<text x="1002.4" y="338.0" font-size="9" fill="#969696" stroke="#969696" stroke-width=".22" textLength="12.5" lengthAdjust="spacingAndGlyphs">150</text>
<path d="M994.8,378.5 H1000.8" stroke="#a8a8b4" stroke-width="1"/>
<text x="1002.4" y="381.0" font-size="9" fill="#969696" stroke="#969696" stroke-width=".22" textLength="12.5" lengthAdjust="spacingAndGlyphs">120</text>
<path d="M994.8,421.5 H1000.8" stroke="#a8a8b4" stroke-width="1"/>
<text x="1002.4" y="424.0" font-size="9" fill="#969696" stroke="#969696" stroke-width=".22" textLength="18.3" lengthAdjust="spacingAndGlyphs">90  O</text>
<path d="M994.8,464.5 H1000.8" stroke="#a8a8b4" stroke-width="1"/>
<text x="1002.4" y="467.0" font-size="9" fill="#969696" stroke="#969696" stroke-width=".22" textLength="8.3" lengthAdjust="spacingAndGlyphs">60</text>
<path d="M994.8,507.5 H1000.8" stroke="#a8a8b4" stroke-width="1"/>
<text x="1002.4" y="510.0" font-size="9" fill="#969696" stroke="#969696" stroke-width=".22" textLength="8.3" lengthAdjust="spacingAndGlyphs">30</text>
<path d="M994.8,550.5 H1000.8" stroke="#a8a8b4" stroke-width="1"/>
<text x="1002.4" y="553.0" font-size="9" fill="#969696" stroke="#969696" stroke-width=".22" textLength="17.8" lengthAdjust="spacingAndGlyphs">0    N</text>
<text x="998.0" y="26.5" font-size="9" fill="#969696" stroke="#969696" stroke-width=".22" textLength="3.0" lengthAdjust="spacingAndGlyphs">°</text>
<text x="108.9" y="563.0" font-size="9" fill="#1e1e1e" stroke="#1e1e1e" stroke-width=".22" text-anchor="middle" textLength="18.7" lengthAdjust="spacingAndGlyphs">00:00</text>
<text x="143.8" y="563.0" font-size="9" fill="#1e1e1e" stroke="#1e1e1e" stroke-width=".22" text-anchor="middle" textLength="18.7" lengthAdjust="spacingAndGlyphs">01:00</text>
<text x="178.6" y="563.0" font-size="9" fill="#1e1e1e" stroke="#1e1e1e" stroke-width=".22" text-anchor="middle" textLength="18.7" lengthAdjust="spacingAndGlyphs">02:00</text>
<text x="213.5" y="563.0" font-size="9" fill="#1e1e1e" stroke="#1e1e1e" stroke-width=".22" text-anchor="middle" textLength="18.7" lengthAdjust="spacingAndGlyphs">03:00</text>
<text x="248.3" y="563.0" font-size="9" fill="#1e1e1e" stroke="#1e1e1e" stroke-width=".22" text-anchor="middle" textLength="18.7" lengthAdjust="spacingAndGlyphs">04:00</text>
<text x="283.2" y="563.0" font-size="9" fill="#1e1e1e" stroke="#1e1e1e" stroke-width=".22" text-anchor="middle" textLength="18.7" lengthAdjust="spacingAndGlyphs">05:00</text>
<text x="318.0" y="563.0" font-size="9" fill="#1e1e1e" stroke="#1e1e1e" stroke-width=".22" text-anchor="middle" textLength="18.7" lengthAdjust="spacingAndGlyphs">06:00</text>
<text x="352.9" y="563.0" font-size="9" fill="#1e1e1e" stroke="#1e1e1e" stroke-width=".22" text-anchor="middle" textLength="18.7" lengthAdjust="spacingAndGlyphs">07:00</text>
<text x="387.7" y="563.0" font-size="9" fill="#1e1e1e" stroke="#1e1e1e" stroke-width=".22" text-anchor="middle" textLength="18.7" lengthAdjust="spacingAndGlyphs">08:00</text>
<text x="422.6" y="563.0" font-size="9" fill="#1e1e1e" stroke="#1e1e1e" stroke-width=".22" text-anchor="middle" textLength="18.7" lengthAdjust="spacingAndGlyphs">09:00</text>
<text x="457.4" y="563.0" font-size="9" fill="#1e1e1e" stroke="#1e1e1e" stroke-width=".22" text-anchor="middle" textLength="18.7" lengthAdjust="spacingAndGlyphs">10:00</text>
<text x="492.3" y="563.0" font-size="9" fill="#1e1e1e" stroke="#1e1e1e" stroke-width=".22" text-anchor="middle" textLength="18.1" lengthAdjust="spacingAndGlyphs">11:00</text>
<text x="527.1" y="563.0" font-size="9" fill="#1e1e1e" stroke="#1e1e1e" stroke-width=".22" text-anchor="middle" textLength="18.7" lengthAdjust="spacingAndGlyphs">12:00</text>
<text x="562.0" y="563.0" font-size="9" fill="#1e1e1e" stroke="#1e1e1e" stroke-width=".22" text-anchor="middle" textLength="18.7" lengthAdjust="spacingAndGlyphs">13:00</text>
<text x="596.9" y="563.0" font-size="9" fill="#1e1e1e" stroke="#1e1e1e" stroke-width=".22" text-anchor="middle" textLength="18.7" lengthAdjust="spacingAndGlyphs">14:00</text>
<text x="631.7" y="563.0" font-size="9" fill="#1e1e1e" stroke="#1e1e1e" stroke-width=".22" text-anchor="middle" textLength="18.7" lengthAdjust="spacingAndGlyphs">15:00</text>
<text x="666.6" y="563.0" font-size="9" fill="#1e1e1e" stroke="#1e1e1e" stroke-width=".22" text-anchor="middle" textLength="18.7" lengthAdjust="spacingAndGlyphs">16:00</text>
<text x="701.4" y="563.0" font-size="9" fill="#1e1e1e" stroke="#1e1e1e" stroke-width=".22" text-anchor="middle" textLength="18.7" lengthAdjust="spacingAndGlyphs">17:00</text>
<text x="736.3" y="563.0" font-size="9" fill="#1e1e1e" stroke="#1e1e1e" stroke-width=".22" text-anchor="middle" textLength="18.7" lengthAdjust="spacingAndGlyphs">18:00</text>
<text x="771.1" y="563.0" font-size="9" fill="#1e1e1e" stroke="#1e1e1e" stroke-width=".22" text-anchor="middle" textLength="18.7" lengthAdjust="spacingAndGlyphs">19:00</text>
<text x="806.0" y="563.0" font-size="9" fill="#1e1e1e" stroke="#1e1e1e" stroke-width=".22" text-anchor="middle" textLength="18.7" lengthAdjust="spacingAndGlyphs">20:00</text>
<text x="840.8" y="563.0" font-size="9" fill="#1e1e1e" stroke="#1e1e1e" stroke-width=".22" text-anchor="middle" textLength="18.7" lengthAdjust="spacingAndGlyphs">21:00</text>
<text x="875.7" y="563.0" font-size="9" fill="#1e1e1e" stroke="#1e1e1e" stroke-width=".22" text-anchor="middle" textLength="18.7" lengthAdjust="spacingAndGlyphs">22:00</text>
<text x="910.5" y="563.0" font-size="9" fill="#1e1e1e" stroke="#1e1e1e" stroke-width=".22" text-anchor="middle" textLength="18.7" lengthAdjust="spacingAndGlyphs">23:00</text>
<text x="945.4" y="563.0" font-size="9" fill="#1e1e1e" stroke="#1e1e1e" stroke-width=".22" text-anchor="middle" textLength="18.7" lengthAdjust="spacingAndGlyphs">24:00</text>
<text x="513.0" y="14.7" font-size="11.5" fill="#3c3c3c" stroke="#3c3c3c" stroke-width=".22" text-anchor="middle" textLength="108.0" lengthAdjust="spacingAndGlyphs">Samstag, 28.06.2014</text>
<text x="899.5" y="11.5" font-size="9" fill="#3c3cff" stroke="#3c3cff" stroke-width=".22" textLength="125.5" lengthAdjust="spacingAndGlyphs">Wetterstation Niedersorpe 440m NN</text>
<rect x="115.4" y="24" width="6.4" height="6.4" fill="#0A0AE6" stroke="#282828" stroke-width="1"/>
<text x="125.0" y="30.0" font-size="9" fill="#3232FF" stroke="#3232FF" stroke-width=".22" textLength="35.3" lengthAdjust="spacingAndGlyphs">Temp. 2m*</text>
<rect x="183.4" y="24" width="6.4" height="6.4" fill="#B40A0A" stroke="#282828" stroke-width="1"/>
<text x="193.0" y="30.0" font-size="9" fill="#3232FF" stroke="#3232FF" stroke-width=".22" textLength="39.0" lengthAdjust="spacingAndGlyphs">Temp. 5cm*</text>
<rect x="251.4" y="24" width="6.4" height="6.4" fill="#94500F" stroke="#282828" stroke-width="1"/>
<text x="261.0" y="30.0" font-size="9" fill="#94500F" stroke="#94500F" stroke-width=".22" textLength="38.2" lengthAdjust="spacingAndGlyphs">Feuchte A.*</text>
<rect x="319.4" y="24" width="6.4" height="6.4" fill="#32F064" stroke="#282828" stroke-width="1"/>
<text x="329.0" y="30.0" font-size="9" fill="#32F064" stroke="#32F064" stroke-width=".22" textLength="33.2" lengthAdjust="spacingAndGlyphs">Luftdruck*</text>
<rect x="387.4" y="24" width="6.4" height="6.4" fill="#1ED2F0" stroke="#282828" stroke-width="1"/>
<text x="397.0" y="30.0" font-size="9" fill="#1ED2F0" stroke="#1ED2F0" stroke-width=".22" textLength="24.6" lengthAdjust="spacingAndGlyphs">Regen*</text>
<rect x="455.4" y="24" width="6.4" height="6.4" fill="#141414" stroke="#282828" stroke-width="1"/>
<text x="465.0" y="30.0" font-size="9" fill="#1e1e1e" stroke="#1e1e1e" stroke-width=".22" textLength="16.8" lengthAdjust="spacingAndGlyphs">Wind</text>
<rect x="523.4" y="24" width="6.4" height="6.4" fill="#828282" stroke="#282828" stroke-width="1"/>
<text x="533.0" y="30.0" font-size="9" fill="#828282" stroke="#828282" stroke-width=".22" textLength="32.0" lengthAdjust="spacingAndGlyphs">Richtung*</text>
<rect x="591.4" y="24" width="6.4" height="6.4" fill="#FFE100" stroke="#282828" stroke-width="1"/>
<text x="601.0" y="30.0" font-size="9" fill="#FFE100" stroke="#FFE100" stroke-width=".22" textLength="46.8" lengthAdjust="spacingAndGlyphs">Sonnenschein</text>
<rect x="659.4" y="24" width="6.4" height="6.4" fill="#14853F" stroke="#282828" stroke-width="1"/>
<text x="669.0" y="30.0" font-size="9" fill="#3232FF" stroke="#3232FF" stroke-width=".22" textLength="32.8" lengthAdjust="spacingAndGlyphs">Taupunkt*</text>
<rect x="727.4" y="24" width="6.4" height="6.4" fill="#F08C1E" stroke="#282828" stroke-width="1"/>
<text x="737.0" y="30.0" font-size="9" fill="#3232FF" stroke="#3232FF" stroke-width=".22" textLength="29.5" lengthAdjust="spacingAndGlyphs">Windchill</text>
<rect x="795.4" y="24" width="6.4" height="6.4" fill="#A01EE6" stroke="#282828" stroke-width="1"/>
<text x="805.0" y="30.0" font-size="9" fill="#1e1e1e" stroke="#1e1e1e" stroke-width=".22" textLength="33.2" lengthAdjust="spacingAndGlyphs">Windböen</text>
<text x="7.5" y="571.0" font-size="9" fill="#1e1e1e" stroke="#1e1e1e" stroke-width=".22" textLength="18.7" lengthAdjust="spacingAndGlyphs">16:32</text>
<path d="M28.7,570.3 a3.2,3.6 0 0 1 6.4,0 z" fill="#FFE100"/>
<text x="266.5" y="571.0" font-size="9" fill="#1e1e1e" stroke="#1e1e1e" stroke-width=".22" textLength="18.7" lengthAdjust="spacingAndGlyphs">05:13</text>
<circle cx="290.4" cy="568" r="2.2" fill="#FFE100"/><path d="M287,568 h7 M290.4,564.6 v7 M288,565.6 l4.8,4.8 M292.8,565.6 l-4.8,4.8" stroke="#FFE100" stroke-width="0.8"/>
<path d="M290.3,550 V556" stroke="#FFE100" stroke-width="1.3"/>
<text x="346.0" y="571.0" font-size="9" fill="#1e1e1e" stroke="#1e1e1e" stroke-width=".22" textLength="18.7" lengthAdjust="spacingAndGlyphs">06:41</text>
<path d="M340.2,571 l2.4,-5.5 l2.4,5.5 z" fill="#FFC800"/><path d="M339,566 h3" stroke="#9696c8" stroke-width="1" stroke-dasharray="1 1"/>
<path d="M341,550 V556" stroke="#828282" stroke-width="1.3"/>
<text x="843.0" y="571.0" font-size="9" fill="#1e1e1e" stroke="#1e1e1e" stroke-width=".22" textLength="18.7" lengthAdjust="spacingAndGlyphs">21:45</text>
<circle cx="866.5" cy="568" r="2.1" fill="none" stroke="#FFE100" stroke-width="1"/>
<path d="M866.7,548 V555" stroke="#FFE100" stroke-width="1.3"/>
<text x="878.0" y="571.0" font-size="9" fill="#1e1e1e" stroke="#1e1e1e" stroke-width=".22" textLength="18.7" lengthAdjust="spacingAndGlyphs">21:56</text>
<path d="M870,570 l2.2,-5 l2.2,5 z" fill="#FFC800"/><path d="M874.5,568 h2.5" stroke="#1e1e1e" stroke-width="0.8"/>
<path d="M873,549.5 V555.5" stroke="#828282" stroke-width="1.3"/>
<rect x="0" y="572.6" width="1024" height="94" fill="#e8dce8"/>
<rect x="1" y="573.6" width="1022.5" height="26.6" fill="#2DFC5C"/>
<rect x="1" y="601.6" width="1023" height="65" fill="url(#dz)"/>
<rect x="62.1" y="572.6" width="1.7" height="94" fill="#e8dce8"/>
<rect x="145.8" y="572.6" width="1.7" height="94" fill="#e8dce8"/>
<rect x="230.4" y="572.6" width="1.7" height="94" fill="#e8dce8"/>
<rect x="314.6" y="572.6" width="1.7" height="94" fill="#e8dce8"/>
<rect x="399.0" y="572.6" width="1.7" height="94" fill="#e8dce8"/>
<rect x="483.2" y="601" width="1.7" height="66" fill="#e8dce8"/>
<rect x="567.2" y="601" width="1.7" height="66" fill="#e8dce8"/>
<rect x="651.2" y="601" width="1.7" height="66" fill="#e8dce8"/>
<rect x="402.2" y="575.2" width="23.8" height="23.4" fill="#b4b6c2"/><path d="M404,581 h9 M404,589 h7 M409,584 h7 M418,592 h5" stroke="#8c90a0" stroke-width="1.6"/><path d="M405,596 l5,-7 M410,597 l6,-9 M416,597 l7,-10 M414,586 l8,-5 M404,578 l8,-2 M417,579 l6,-2" stroke="#e6e8f0" stroke-width="1.8"/>
<g stroke="#0A500A" stroke-width="0.35">
<text x="5.5" y="584.0" font-size="9" fill="#0A500A" stroke="#0A500A" stroke-width=".22" textLength="43.5" lengthAdjust="spacingAndGlyphs">Wetterdaten</text>
<text x="5.5" y="595.6" font-size="9" fill="#0A500A" stroke="#0A500A" stroke-width=".22" textLength="53.4" lengthAdjust="spacingAndGlyphs">28.06.14 23:59</text>
<text x="67.5" y="584.0" font-size="9" fill="#0A500A" stroke="#0A500A" stroke-width=".22" textLength="28.5" lengthAdjust="spacingAndGlyphs">Temp. I.</text>
<text x="142.0" y="584.0" font-size="9" fill="#0A500A" stroke="#0A500A" stroke-width=".22" text-anchor="end" textLength="26.8" lengthAdjust="spacingAndGlyphs">23,8 °C</text>
<text x="67.5" y="595.6" font-size="9" fill="#0A500A" stroke="#0A500A" stroke-width=".22" textLength="35.6" lengthAdjust="spacingAndGlyphs">Feuchte I.</text>
<text x="142.0" y="595.6" font-size="9" fill="#0A500A" stroke="#0A500A" stroke-width=".22" text-anchor="end" textLength="18.3" lengthAdjust="spacingAndGlyphs">50 %</text>
<text x="151.5" y="584.0" font-size="9" fill="#0A500A" stroke="#0A500A" stroke-width=".22" textLength="35.2" lengthAdjust="spacingAndGlyphs">Temp. 2m</text>
<text x="227.0" y="584.0" font-size="9" fill="#0A500A" stroke="#0A500A" stroke-width=".22" text-anchor="end" textLength="26.8" lengthAdjust="spacingAndGlyphs">12,3 °C</text>
<text x="151.5" y="595.6" font-size="9" fill="#0A500A" stroke="#0A500A" stroke-width=".22" textLength="38.3" lengthAdjust="spacingAndGlyphs">Feuchte A.</text>
<text x="227.0" y="595.6" font-size="9" fill="#0A500A" stroke="#0A500A" stroke-width=".22" text-anchor="end" textLength="18.3" lengthAdjust="spacingAndGlyphs">96 %</text>
<text x="236.5" y="584.0" font-size="9" fill="#0A500A" stroke="#0A500A" stroke-width=".22" textLength="32.9" lengthAdjust="spacingAndGlyphs">Luftdruck</text>
<text x="236.5" y="595.6" font-size="9" fill="#0A500A" stroke="#0A500A" stroke-width=".22" textLength="23.6" lengthAdjust="spacingAndGlyphs">Regen</text>
<text x="311.0" y="595.6" font-size="9" fill="#0A500A" stroke="#0A500A" stroke-width=".22" text-anchor="end" textLength="26.7" lengthAdjust="spacingAndGlyphs">0.0 l/m²</text>
<text x="312.0" y="584.0" font-size="9" fill="#0A500A" stroke="#0A500A" stroke-width=".22" text-anchor="end" textLength="41.0" lengthAdjust="spacingAndGlyphs">1005.8 hPa</text>
<text x="320.5" y="584.0" font-size="9" fill="#0A500A" stroke="#0A500A" stroke-width=".22" textLength="18.2" lengthAdjust="spacingAndGlyphs">Wind</text>
<text x="396.0" y="584.0" font-size="9" fill="#0A500A" stroke="#0A500A" stroke-width=".22" text-anchor="end" textLength="30.7" lengthAdjust="spacingAndGlyphs">0.0 km/h</text>
<text x="320.5" y="595.6" font-size="9" fill="#0A500A" stroke="#0A500A" stroke-width=".22" textLength="31.6" lengthAdjust="spacingAndGlyphs">Richtung</text>
<text x="396.0" y="595.6" font-size="9" fill="#0A500A" stroke="#0A500A" stroke-width=".22" text-anchor="end" textLength="20.9" lengthAdjust="spacingAndGlyphs">S-SW</text>
<text x="786.0" y="584.0" font-size="9" fill="#0A500A" stroke="#0A500A" stroke-width=".22" textLength="32.1" lengthAdjust="spacingAndGlyphs">WR 210°</text>
<text x="786.0" y="595.6" font-size="9" fill="#0A500A" stroke="#0A500A" stroke-width=".22" textLength="40.1" lengthAdjust="spacingAndGlyphs">WC 12,3°C</text>
<text x="836.5" y="584.0" font-size="9" fill="#0A500A" stroke="#0A500A" stroke-width=".22" textLength="18.7" lengthAdjust="spacingAndGlyphs">Solar</text>
<text x="836.5" y="595.6" font-size="9" fill="#0A500A" stroke="#0A500A" stroke-width=".22" textLength="10.2" lengthAdjust="spacingAndGlyphs">ET</text>
<text x="918.0" y="584.0" font-size="9" fill="#0A500A" stroke="#0A500A" stroke-width=".22" text-anchor="end" textLength="25.8" lengthAdjust="spacingAndGlyphs">0 W/m²</text>
<text x="912.0" y="595.6" font-size="9" fill="#0A500A" stroke="#0A500A" stroke-width=".22" text-anchor="end" textLength="35.6" lengthAdjust="spacingAndGlyphs">0.000 mm</text>
<text x="936.5" y="584.0" font-size="9" fill="#0A500A" stroke="#0A500A" stroke-width=".22" textLength="11.1" lengthAdjust="spacingAndGlyphs">UV</text>
<text x="936.5" y="595.6" font-size="9" fill="#0A500A" stroke="#0A500A" stroke-width=".22" textLength="32.5" lengthAdjust="spacingAndGlyphs">Taupunkt</text>
<text x="1020.5" y="584.0" font-size="9" fill="#0A500A" stroke="#0A500A" stroke-width=".22" text-anchor="end" textLength="28.9" lengthAdjust="spacingAndGlyphs">0.0 UV-I</text>
<text x="1013.0" y="595.6" font-size="9" fill="#0A500A" stroke="#0A500A" stroke-width=".22" text-anchor="end" textLength="26.2" lengthAdjust="spacingAndGlyphs">11,7 °C</text>
</g>
<text x="6.2" y="615.0" font-size="9" fill="#32190A" font-weight="bold" textLength="27.8" lengthAdjust="spacingAndGlyphs">Sensor</text>
<text x="6.2" y="626.3" font-size="9" fill="#32190A" font-weight="bold" textLength="32.2" lengthAdjust="spacingAndGlyphs">MinWert</text>
<text x="6.2" y="638.0" font-size="9" fill="#32190A" font-weight="bold" textLength="34.0" lengthAdjust="spacingAndGlyphs">MaxWert</text>
<text x="6.2" y="649.5" font-size="9" fill="#32190A" font-weight="bold" textLength="50.5" lengthAdjust="spacingAndGlyphs">Durchschnitt</text>
<text x="6.2" y="661.0" font-size="9" fill="#32190A" font-weight="bold" textLength="46.0" lengthAdjust="spacingAndGlyphs">28.06. 23:59</text>
<text x="68.2" y="615.0" font-size="9" fill="#32190A" font-weight="bold" textLength="39.5" lengthAdjust="spacingAndGlyphs">Temp. 2m</text>
<text x="142.0" y="615.0" font-size="9" fill="#32190A" text-anchor="end" font-weight="bold" textLength="8.3" lengthAdjust="spacingAndGlyphs">°C</text>
<text x="72.2" y="626.3" font-size="9" fill="#64320A" stroke="#64320A" stroke-width=".22" textLength="20.0" lengthAdjust="spacingAndGlyphs">05:32</text>
<text x="142.0" y="626.3" font-size="9" fill="#64320A" stroke="#64320A" stroke-width=".22" text-anchor="end" textLength="15.0" lengthAdjust="spacingAndGlyphs">11.2</text>
<text x="72.2" y="638.0" font-size="9" fill="#64320A" stroke="#64320A" stroke-width=".22" textLength="20.0" lengthAdjust="spacingAndGlyphs">13:42</text>
<text x="142.0" y="638.0" font-size="9" fill="#64320A" stroke="#64320A" stroke-width=".22" text-anchor="end" textLength="15.6" lengthAdjust="spacingAndGlyphs">19.3</text>
<text x="142.0" y="649.5" font-size="9" fill="#64320A" stroke="#64320A" stroke-width=".22" text-anchor="end" textLength="20.0" lengthAdjust="spacingAndGlyphs">13.97</text>
<text x="68.2" y="661.0" font-size="9" fill="#64320A" stroke="#64320A" stroke-width=".22" textLength="27.6" lengthAdjust="spacingAndGlyphs">F: 96 %</text>
<text x="142.0" y="661.0" font-size="9" fill="#32190A" text-anchor="end" font-weight="bold" textLength="15.6" lengthAdjust="spacingAndGlyphs">12.3</text>
<text x="152.2" y="615.0" font-size="9" fill="#32190A" font-weight="bold" textLength="43.7" lengthAdjust="spacingAndGlyphs">Temp. 5cm</text>
<text x="227.0" y="615.0" font-size="9" fill="#32190A" text-anchor="end" font-weight="bold" textLength="8.3" lengthAdjust="spacingAndGlyphs">°C</text>
<text x="156.2" y="626.3" font-size="9" fill="#64320A" stroke="#64320A" stroke-width=".22" textLength="20.0" lengthAdjust="spacingAndGlyphs">03:58</text>
<text x="227.0" y="626.3" font-size="9" fill="#64320A" stroke="#64320A" stroke-width=".22" text-anchor="end" textLength="15.6" lengthAdjust="spacingAndGlyphs">10.6</text>
<text x="156.2" y="638.0" font-size="9" fill="#64320A" stroke="#64320A" stroke-width=".22" textLength="20.0" lengthAdjust="spacingAndGlyphs">13:14</text>
<text x="227.0" y="638.0" font-size="9" fill="#64320A" stroke="#64320A" stroke-width=".22" text-anchor="end" textLength="15.6" lengthAdjust="spacingAndGlyphs">26.1</text>
<text x="227.0" y="649.5" font-size="9" fill="#64320A" stroke="#64320A" stroke-width=".22" text-anchor="end" textLength="20.0" lengthAdjust="spacingAndGlyphs">15.10</text>
<text x="227.0" y="661.0" font-size="9" fill="#32190A" text-anchor="end" font-weight="bold" textLength="15.6" lengthAdjust="spacingAndGlyphs">12.2</text>
<text x="237.2" y="615.0" font-size="9" fill="#32190A" font-weight="bold" textLength="43.5" lengthAdjust="spacingAndGlyphs">Feuchte A.</text>
<text x="311.0" y="615.0" font-size="9" fill="#32190A" text-anchor="end" font-weight="bold" textLength="8.3" lengthAdjust="spacingAndGlyphs">%</text>
<text x="241.2" y="626.3" font-size="9" fill="#64320A" stroke="#64320A" stroke-width=".22" textLength="20.0" lengthAdjust="spacingAndGlyphs">13:44</text>
<text x="311.0" y="626.3" font-size="9" fill="#64320A" stroke="#64320A" stroke-width=".22" text-anchor="end" textLength="8.9" lengthAdjust="spacingAndGlyphs">69</text>
<text x="241.2" y="638.0" font-size="9" fill="#64320A" stroke="#64320A" stroke-width=".22" textLength="20.0" lengthAdjust="spacingAndGlyphs">04:26</text>
<text x="311.0" y="638.0" font-size="9" fill="#64320A" stroke="#64320A" stroke-width=".22" text-anchor="end" textLength="8.9" lengthAdjust="spacingAndGlyphs">97</text>
<text x="311.0" y="649.5" font-size="9" fill="#64320A" stroke="#64320A" stroke-width=".22" text-anchor="end" textLength="8.9" lengthAdjust="spacingAndGlyphs">92</text>
<text x="237.2" y="661.0" font-size="9" fill="#64320A" stroke="#64320A" stroke-width=".22" textLength="38.3" lengthAdjust="spacingAndGlyphs">10.44 g/m³</text>
<text x="311.0" y="661.0" font-size="9" fill="#32190A" text-anchor="end" font-weight="bold" textLength="8.9" lengthAdjust="spacingAndGlyphs">96</text>
<text x="321.2" y="615.0" font-size="9" fill="#32190A" font-weight="bold" textLength="25.0" lengthAdjust="spacingAndGlyphs">Regen</text>
<text x="396.0" y="615.0" font-size="9" fill="#32190A" text-anchor="end" font-weight="bold" textLength="17.5" lengthAdjust="spacingAndGlyphs">l/m²</text>
<text x="325.2" y="638.0" font-size="9" fill="#64320A" stroke="#64320A" stroke-width=".22" textLength="20.0" lengthAdjust="spacingAndGlyphs">00:54</text>
<text x="396.0" y="638.0" font-size="9" fill="#64320A" stroke="#64320A" stroke-width=".22" text-anchor="end" textLength="11.1" lengthAdjust="spacingAndGlyphs">1.4</text>
<text x="321.2" y="649.5" font-size="9" fill="#64320A" stroke="#64320A" stroke-width=".22" textLength="30.3" lengthAdjust="spacingAndGlyphs">Gesamt:</text>
<text x="396.0" y="649.5" font-size="9" fill="#64320A" stroke="#64320A" stroke-width=".22" text-anchor="end" textLength="15.6" lengthAdjust="spacingAndGlyphs">21.4</text>
<text x="325.2" y="661.0" font-size="9" fill="#64320A" stroke="#64320A" stroke-width=".22" textLength="31.2" lengthAdjust="spacingAndGlyphs">21.4 l/m²</text>
<text x="396.0" y="661.0" font-size="9" fill="#32190A" text-anchor="end" font-weight="bold" textLength="11.1" lengthAdjust="spacingAndGlyphs">0.0</text>
<text x="406.2" y="615.0" font-size="9" fill="#32190A" font-weight="bold" textLength="37.7" lengthAdjust="spacingAndGlyphs">Luftdruck</text>
<text x="480.0" y="615.0" font-size="9" fill="#32190A" text-anchor="end" font-weight="bold" textLength="13.8" lengthAdjust="spacingAndGlyphs">hPa</text>
<text x="410.2" y="626.3" font-size="9" fill="#64320A" stroke="#64320A" stroke-width=".22" textLength="20.0" lengthAdjust="spacingAndGlyphs">23:24</text>
<text x="480.0" y="626.3" font-size="9" fill="#64320A" stroke="#64320A" stroke-width=".22" text-anchor="end" textLength="24.5" lengthAdjust="spacingAndGlyphs">1005.7</text>
<text x="410.2" y="638.0" font-size="9" fill="#64320A" stroke="#64320A" stroke-width=".22" textLength="20.0" lengthAdjust="spacingAndGlyphs">00:52</text>
<text x="480.0" y="638.0" font-size="9" fill="#64320A" stroke="#64320A" stroke-width=".22" text-anchor="end" textLength="24.5" lengthAdjust="spacingAndGlyphs">1014.3</text>
<text x="406.2" y="649.5" font-size="9" fill="#64320A" stroke="#64320A" stroke-width=".22" textLength="35.8" lengthAdjust="spacingAndGlyphs">^1.7hPa/h</text>
<text x="480.0" y="649.5" font-size="9" fill="#64320A" stroke="#64320A" stroke-width=".22" text-anchor="end" textLength="24.5" lengthAdjust="spacingAndGlyphs">1010.1</text>
<text x="406.2" y="661.0" font-size="9" fill="#64320A" stroke="#64320A" stroke-width=".22" textLength="37.4" lengthAdjust="spacingAndGlyphs">regnerisch</text>
<text x="480.0" y="661.0" font-size="9" fill="#32190A" text-anchor="end" font-weight="bold" textLength="24.5" lengthAdjust="spacingAndGlyphs">1005.8</text>
<text x="490.2" y="615.0" font-size="9" fill="#32190A" font-weight="bold" textLength="55.0" lengthAdjust="spacingAndGlyphs">Sonnenschein</text>
<text x="564.0" y="615.0" font-size="9" fill="#32190A" text-anchor="end" font-weight="bold" textLength="13.5" lengthAdjust="spacingAndGlyphs">min</text>
<text x="494.2" y="638.0" font-size="9" fill="#64320A" stroke="#64320A" stroke-width=".22" textLength="20.0" lengthAdjust="spacingAndGlyphs">05:28</text>
<text x="564.0" y="638.0" font-size="9" fill="#64320A" stroke="#64320A" stroke-width=".22" text-anchor="end" textLength="4.5" lengthAdjust="spacingAndGlyphs">1</text>
<text x="490.2" y="649.5" font-size="9" fill="#64320A" stroke="#64320A" stroke-width=".22" textLength="22.3" lengthAdjust="spacingAndGlyphs">1:37 h</text>
<text x="564.0" y="649.5" font-size="9" fill="#64320A" stroke="#64320A" stroke-width=".22" text-anchor="end" textLength="4.5" lengthAdjust="spacingAndGlyphs">0</text>
<text x="564.0" y="661.0" font-size="9" fill="#32190A" text-anchor="end" font-weight="bold" textLength="4.5" lengthAdjust="spacingAndGlyphs">0</text>
<text x="574.2" y="615.0" font-size="9" fill="#32190A" font-weight="bold" textLength="39.3" lengthAdjust="spacingAndGlyphs">Windböen</text>
<text x="648.0" y="615.0" font-size="9" fill="#32190A" text-anchor="end" font-weight="bold" textLength="21.6" lengthAdjust="spacingAndGlyphs">km/h</text>
<text x="574.2" y="626.3" font-size="9" fill="#64320A" stroke="#64320A" stroke-width=".22" textLength="34.7" lengthAdjust="spacingAndGlyphs">Ø 10 min.</text>
<text x="648.0" y="626.3" font-size="9" fill="#64320A" stroke="#64320A" stroke-width=".22" text-anchor="end" textLength="11.1" lengthAdjust="spacingAndGlyphs">0.0</text>
<text x="578.2" y="638.0" font-size="9" fill="#64320A" stroke="#64320A" stroke-width=".22" textLength="20.0" lengthAdjust="spacingAndGlyphs">00:51</text>
<text x="648.0" y="638.0" font-size="9" fill="#64320A" stroke="#64320A" stroke-width=".22" text-anchor="end" textLength="30.7" lengthAdjust="spacingAndGlyphs">SW 27.4</text>
<text x="578.2" y="649.5" font-size="9" fill="#64320A" stroke="#64320A" stroke-width=".22" textLength="28.5" lengthAdjust="spacingAndGlyphs">42.9 km</text>
<text x="648.0" y="649.5" font-size="9" fill="#64320A" stroke="#64320A" stroke-width=".22" text-anchor="end" textLength="11.1" lengthAdjust="spacingAndGlyphs">1.8</text>
<text x="578.2" y="661.0" font-size="9" fill="#64320A" stroke="#64320A" stroke-width=".22" textLength="24.5" lengthAdjust="spacingAndGlyphs">0 Bft N</text>
<text x="648.0" y="661.0" font-size="9" fill="#32190A" text-anchor="end" font-weight="bold" textLength="11.1" lengthAdjust="spacingAndGlyphs">0.0</text>
<text x="658.2" y="615.0" font-size="9" fill="#32190A" font-weight="bold" textLength="19.5" lengthAdjust="spacingAndGlyphs">Wind</text>
<text x="732.0" y="615.0" font-size="9" fill="#32190A" text-anchor="end" font-weight="bold" textLength="21.6" lengthAdjust="spacingAndGlyphs">km/h</text>
<text x="658.2" y="626.3" font-size="9" fill="#64320A" stroke="#64320A" stroke-width=".22" textLength="34.7" lengthAdjust="spacingAndGlyphs">Ø 10 min.</text>
<text x="732.0" y="626.3" font-size="9" fill="#64320A" stroke="#64320A" stroke-width=".22" text-anchor="end" textLength="11.1" lengthAdjust="spacingAndGlyphs">0.0</text>
<text x="662.2" y="638.0" font-size="9" fill="#64320A" stroke="#64320A" stroke-width=".22" textLength="20.0" lengthAdjust="spacingAndGlyphs">00:55</text>
<text x="732.0" y="638.0" font-size="9" fill="#64320A" stroke="#64320A" stroke-width=".22" text-anchor="end" textLength="36.8" lengthAdjust="spacingAndGlyphs">S-SO 11.2</text>
<text x="662.2" y="649.5" font-size="9" fill="#64320A" stroke="#64320A" stroke-width=".22" textLength="28.5" lengthAdjust="spacingAndGlyphs">42.9 km</text>
<text x="732.0" y="649.5" font-size="9" fill="#64320A" stroke="#64320A" stroke-width=".22" text-anchor="end" textLength="11.1" lengthAdjust="spacingAndGlyphs">0.6</text>
<text x="662.2" y="661.0" font-size="9" fill="#64320A" stroke="#64320A" stroke-width=".22" textLength="39.6" lengthAdjust="spacingAndGlyphs">0 Bft S-SW</text>
<text x="732.0" y="661.0" font-size="9" fill="#32190A" text-anchor="end" font-weight="bold" textLength="11.1" lengthAdjust="spacingAndGlyphs">0.0</text>
</svg></body></html>
